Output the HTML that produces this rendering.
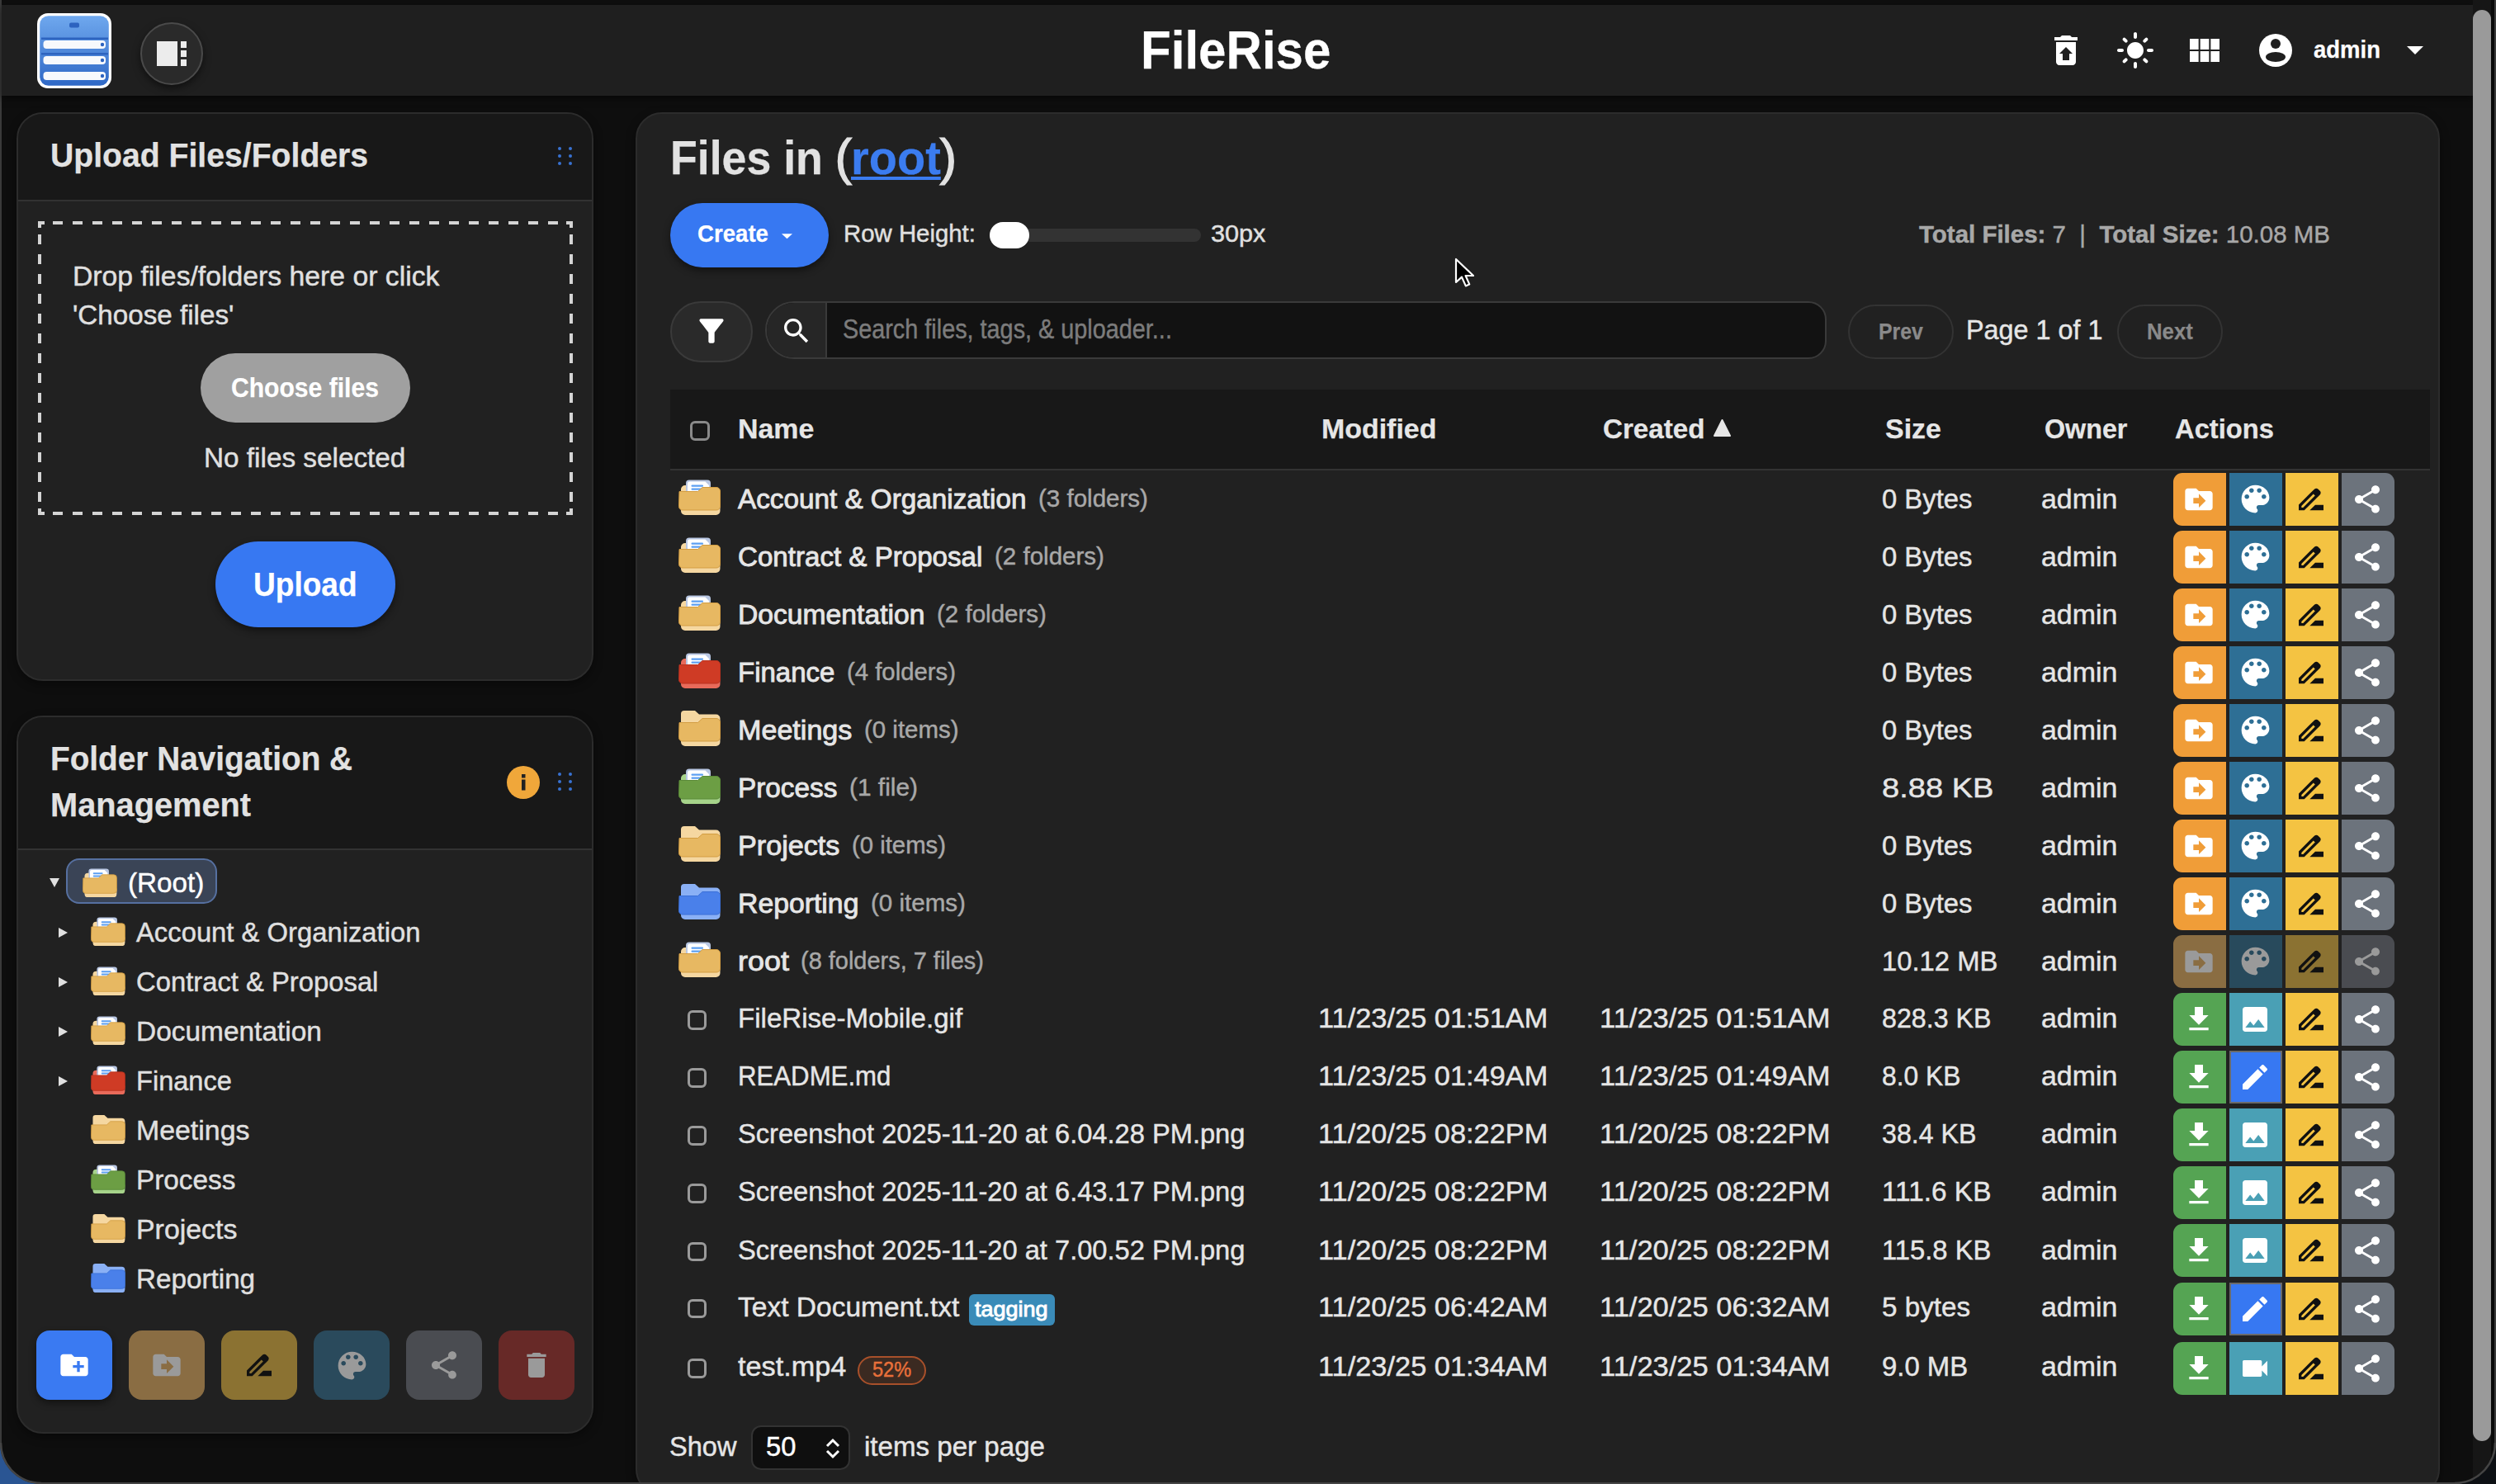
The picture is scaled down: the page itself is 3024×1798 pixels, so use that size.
<!DOCTYPE html><html><head><meta charset="utf-8"><style>
html,body{margin:0;padding:0}
body{width:3024px;height:1798px;overflow:hidden;position:relative;background:#0e0e0e;font-family:'Liberation Sans', sans-serif;}
b{font-weight:700}
</style></head><body><div style="position:absolute;left:0px;top:0px;width:3024px;height:6px;background:#0f0f0f"></div><div style="position:absolute;left:0px;top:0px;width:2px;height:1798px;background:#3a3a3a"></div><div style="position:absolute;left:2px;top:6px;width:2994px;height:110px;background:#1f1f1f;box-shadow:0 3px 8px rgba(0,0,0,.55)"></div><svg style="position:absolute;left:45px;top:15.5px" width="90" height="91" viewBox="0 0 90 91">
<defs><linearGradient id="lg" x1="0" y1="0" x2="0" y2="1"><stop offset="0" stop-color="#6fa8ee"/><stop offset="1" stop-color="#2f68c6"/></linearGradient></defs>
<rect x="0" y="0" width="90" height="91" rx="13" fill="#fff"/>
<rect x="3.2" y="3.2" width="83.6" height="84.6" rx="10.5" fill="url(#lg)"/>
<rect x="39" y="11.5" width="12" height="6" rx="2" fill="#2d63bf"/>
<rect x="5" y="29.5" width="81" height="2.5" fill="#2d63bf"/>
<rect x="5" y="48" width="81" height="2.5" fill="#2d63bf"/>
<rect x="7.5" y="33" width="75.5" height="10" rx="4" fill="#f7f9fc"/>
<rect x="7.5" y="52" width="75.5" height="10" rx="4" fill="#f7f9fc"/>
<rect x="7.5" y="71" width="75.5" height="10" rx="4" fill="#f7f9fc"/>
<circle cx="79" cy="38" r="2.2" fill="#2d63bf"/><circle cx="79" cy="57" r="2.2" fill="#2d63bf"/><circle cx="79" cy="76" r="2.2" fill="#2d63bf"/>
</svg><div style="position:absolute;left:170px;top:27px;width:76px;height:76px;background:#2a2a2a;border-radius:50%;border:2px solid #4a4a4a;box-shadow:0 4px 10px rgba(0,0,0,.5);box-sizing:border-box"></div><div style="position:absolute;left:190px;top:50px;width:25px;height:30px;background:#ececec"></div><div style="position:absolute;left:219px;top:50px;width:7px;height:7.5px;background:#ececec"></div><div style="position:absolute;left:219px;top:61px;width:7px;height:7.5px;background:#ececec"></div><div style="position:absolute;left:219px;top:72px;width:7px;height:7.5px;background:#ececec"></div><div style="position:absolute;left:1382.48px;top:29.00px;font-size:64.0px;line-height:64.0px;font-weight:700;color:#ffffff;white-space:pre;transform:scaleX(0.9387);transform-origin:0 0;;-webkit-text-stroke:0.25px #ffffff">FileRise</div><svg style="position:absolute;left:2479px;top:37px;" width="48" height="48" viewBox="0 0 24 24"><path fill="#fff" d="M19 4h-3.5l-1-1h-5l-1 1H5v2h14zM6 7v12c0 1.1.9 2 2 2h8c1.1 0 2-.9 2-2V7H6zm8 7v4h-4v-4H8l4-4 4 4h-2z"/></svg><svg style="position:absolute;left:2563px;top:37px;" width="48" height="48" viewBox="0 0 24 24"><path fill="#fff" d="M12 7c-2.76 0-5 2.24-5 5s2.24 5 5 5 5-2.24 5-5-2.24-5-5-5zM2 13h2c.55 0 1-.45 1-1s-.45-1-1-1H2c-.55 0-1 .45-1 1s.45 1 1 1zm18 0h2c.55 0 1-.45 1-1s-.45-1-1-1h-2c-.55 0-1 .45-1 1s.45 1 1 1zM11 2v2c0 .55.45 1 1 1s1-.45 1-1V2c0-.55-.45-1-1-1s-1 .45-1 1zm0 18v2c0 .55.45 1 1 1s1-.45 1-1v-2c0-.55-.45-1-1-1s-1 .45-1 1zM5.99 4.58c-.39-.39-1.03-.39-1.41 0-.39.39-.39 1.03 0 1.41l1.06 1.06c.39.39 1.03.39 1.41 0s.39-1.03 0-1.41L5.99 4.58zm12.37 12.37c-.39-.39-1.03-.39-1.41 0-.39.39-.39 1.03 0 1.41l1.06 1.06c.39.39 1.03.39 1.41 0 .39-.39.39-1.03 0-1.41l-1.06-1.06zm1.06-10.96c.39-.39.39-1.03 0-1.41-.39-.39-1.03-.39-1.41 0l-1.06 1.06c-.39.39-.39 1.03 0 1.41s1.03.39 1.41 0l1.06-1.06zM7.05 18.36c.39-.39.39-1.03 0-1.41-.39-.39-1.03-.39-1.41 0l-1.06 1.06c-.39.39-.39 1.03 0 1.41s1.03.39 1.41 0l1.06-1.06z"/></svg><svg style="position:absolute;left:2647px;top:37px;" width="48" height="48" viewBox="0 0 24 24"><path fill="#fff" d="M14.67 5v6.5H9.33V5h5.34zm1 6.5H21V5h-5.33v6.5zm-1 7.5v-6.5H9.33V19h5.34zm1-6.5V19H21v-6.5h-5.33zm-7.34 0H3V19h5.33v-6.5zm0-1V5H3v6.5h5.33z"/></svg><svg style="position:absolute;left:2737px;top:41px" width="40" height="40" viewBox="0 0 40 40">
<circle cx="20" cy="20" r="20" fill="#fff"/><circle cx="20" cy="12" r="6" fill="#1f1f1f"/><ellipse cx="20" cy="28" rx="12" ry="6" fill="#1f1f1f"/></svg><div style="position:absolute;left:2803.38px;top:44.75px;font-size:29.5px;line-height:29.5px;font-weight:700;color:#fff;white-space:pre;transform:scaleX(0.9318);transform-origin:0 0;;-webkit-text-stroke:0.25px #fff">admin</div><svg style="position:absolute;left:2916px;top:56px" width="20" height="10" viewBox="0 0 20 10"><path d="M0 0h20L10 10z" fill="#fff"/></svg><div style="position:absolute;left:2996px;top:0px;width:22px;height:1798px;background:#161616"></div><div style="position:absolute;left:2996px;top:12px;width:22px;height:1734px;background:#9a9a9a;border-radius:11px"></div><div style="position:absolute;left:3018px;top:0px;width:6px;height:1798px;background:#0a0a0a"></div><div style="position:absolute;left:20px;top:136px;width:699px;height:689px;background:#212121;border:2px solid #2c2c2c;border-radius:32px;box-sizing:border-box;overflow:hidden;box-shadow:0 4px 12px rgba(0,0,0,.4)"></div><div style="position:absolute;left:22px;top:138px;width:695px;height:104px;background:#181818;border-radius:30px 30px 0 0"></div><div style="position:absolute;left:22px;top:242px;width:695px;height:2px;background:#323232"></div><div style="position:absolute;left:60.74px;top:167.50px;font-size:41.0px;line-height:41.0px;font-weight:700;color:#e2e2e2;white-space:pre;transform:scaleX(0.9550);transform-origin:0 0;;-webkit-text-stroke:0.25px #e2e2e2">Upload Files/Folders</div><div style="position:absolute;left:675.5px;top:178.3px;width:4.0px;height:4.0px;background:#3872d2;border-radius:50%"></div><div style="position:absolute;left:675.5px;top:187.3px;width:4.0px;height:4.0px;background:#3872d2;border-radius:50%"></div><div style="position:absolute;left:675.5px;top:196.3px;width:4.0px;height:4.0px;background:#3872d2;border-radius:50%"></div><div style="position:absolute;left:689.0px;top:178.3px;width:4.0px;height:4.0px;background:#3872d2;border-radius:50%"></div><div style="position:absolute;left:689.0px;top:187.3px;width:4.0px;height:4.0px;background:#3872d2;border-radius:50%"></div><div style="position:absolute;left:689.0px;top:196.3px;width:4.0px;height:4.0px;background:#3872d2;border-radius:50%"></div><svg style="position:absolute;left:46px;top:268px" width="648" height="356" viewBox="0 0 648 356"><g stroke="#d4d4d4" stroke-width="4" fill="none"><path d="M0 2H648" stroke-dasharray="12 12" stroke-dashoffset="6"/><path d="M0 354H648" stroke-dasharray="12 12" stroke-dashoffset="6"/><path d="M2 0V356" stroke-dasharray="12 12" stroke-dashoffset="8"/><path d="M646 0V356" stroke-dasharray="12 12" stroke-dashoffset="8"/><path d="M0 2H8M2 0V8M640 2H648M646 0V8M0 354H8M2 348V356M640 354H648M646 348V356"/></g></svg><div style="position:absolute;left:88.13px;top:317.00px;font-size:34.0px;line-height:34.0px;font-weight:400;color:#e0e0e0;white-space:pre;transform:scaleX(0.9923);transform-origin:0 0;;-webkit-text-stroke:0.45px #e0e0e0">Drop files/folders here or click</div><div style="position:absolute;left:88.13px;top:364.00px;font-size:34.0px;line-height:34.0px;font-weight:400;color:#e0e0e0;white-space:pre;transform:scaleX(0.9765);transform-origin:0 0;;-webkit-text-stroke:0.45px #e0e0e0">'Choose files'</div><div style="position:absolute;left:243px;top:428px;width:254px;height:84px;background:#a0a0a0;border-radius:42px"></div><div style="position:absolute;left:279.63px;top:451.50px;font-size:34.0px;line-height:34.0px;font-weight:700;color:#ffffff;white-space:pre;transform:scaleX(0.8849);transform-origin:0 0;;-webkit-text-stroke:0.25px #ffffff">Choose files</div><div style="position:absolute;left:247.13px;top:537.00px;font-size:34.0px;line-height:34.0px;font-weight:400;color:#e0e0e0;white-space:pre;transform:scaleX(0.9797);transform-origin:0 0;;-webkit-text-stroke:0.45px #e0e0e0">No files selected</div><div style="position:absolute;left:261px;top:656px;width:218px;height:104px;background:#3778f2;border-radius:52px;box-shadow:0 4px 10px rgba(0,0,0,.45)"></div><div style="position:absolute;left:306.75px;top:687.50px;font-size:41.0px;line-height:41.0px;font-weight:700;color:#ffffff;white-space:pre;transform:scaleX(0.9040);transform-origin:0 0;;-webkit-text-stroke:0.25px #ffffff">Upload</div><div style="position:absolute;left:20px;top:867px;width:699px;height:870px;background:#212121;border:2px solid #2c2c2c;border-radius:32px;box-sizing:border-box;overflow:hidden;box-shadow:0 4px 12px rgba(0,0,0,.4)"></div><div style="position:absolute;left:22px;top:869px;width:695px;height:159px;background:#181818;border-radius:30px 30px 0 0"></div><div style="position:absolute;left:22px;top:1028px;width:695px;height:2px;background:#323232"></div><div style="position:absolute;left:60.74px;top:898.50px;font-size:41.0px;line-height:41.0px;font-weight:700;color:#e2e2e2;white-space:pre;transform:scaleX(0.9453);transform-origin:0 0;;-webkit-text-stroke:0.25px #e2e2e2">Folder Navigation &amp;</div><div style="position:absolute;left:60.74px;top:954.50px;font-size:41.0px;line-height:41.0px;font-weight:700;color:#e2e2e2;white-space:pre;transform:scaleX(0.9700);transform-origin:0 0;;-webkit-text-stroke:0.25px #e2e2e2">Management</div><svg style="position:absolute;left:614px;top:928px" width="40" height="40" viewBox="0 0 40 40"><circle cx="20" cy="20" r="20" fill="#f0a73a"/><rect x="18" y="16.5" width="4.5" height="13" fill="#222"/><rect x="18" y="10" width="4.5" height="4.5" fill="#222"/></svg><div style="position:absolute;left:675.5px;top:936.3px;width:4.0px;height:4.0px;background:#3872d2;border-radius:50%"></div><div style="position:absolute;left:675.5px;top:945.3px;width:4.0px;height:4.0px;background:#3872d2;border-radius:50%"></div><div style="position:absolute;left:675.5px;top:954.3px;width:4.0px;height:4.0px;background:#3872d2;border-radius:50%"></div><div style="position:absolute;left:689.0px;top:936.3px;width:4.0px;height:4.0px;background:#3872d2;border-radius:50%"></div><div style="position:absolute;left:689.0px;top:945.3px;width:4.0px;height:4.0px;background:#3872d2;border-radius:50%"></div><div style="position:absolute;left:689.0px;top:954.3px;width:4.0px;height:4.0px;background:#3872d2;border-radius:50%"></div><div style="position:absolute;left:80px;top:1040px;width:183px;height:55px;background:#3a4456;border:2px solid #5670a0;border-radius:16px;box-sizing:border-box"></div><svg style="position:absolute;left:60px;top:1064px" width="12" height="11" viewBox="0 0 12 11"><path d="M0 0h12L6 11z" fill="#e0e0e0"/></svg><svg style="position:absolute;left:100px;top:1052px" width="41.82" height="35.26" viewBox="0 0 51 43"><path d="M3 12a5 5 0 0 1 5-5h17v23h25.5v8a5 5 0 0 1-5 5H8a5 5 0 0 1-5-5z" fill="#f5d7a1"/><path d="M9 4.5a4 4 0 0 1 4-4h22a4 4 0 0 1 4 4v16H9z" fill="#b8c6e2"/><path d="M11 5a2.5 2.5 0 0 1 2.5-2.5h19l4.5 4.5v14H11z" fill="#fff"/><rect x="15.5" y="6.5" width="14.5" height="2.2" rx="1" fill="#5c9ff2"/><rect x="15.5" y="10.5" width="14.5" height="2.2" rx="1" fill="#5c9ff2"/><path d="M1 14.5h22.5l5.5-5h17a4.5 4.5 0 0 1 4.5 4.5v18.5a4.5 4.5 0 0 1-4.5 4.5H5a4.5 4.5 0 0 1-4.5-4.5z" fill="#e7b862" stroke="#d39d42" stroke-width="1"/></svg><div style="position:absolute;left:155.13px;top:1052.00px;font-size:34.0px;line-height:34.0px;font-weight:400;color:#ffffff;white-space:pre;transform:scaleX(0.9781);transform-origin:0 0;;-webkit-text-stroke:0.45px #ffffff">(Root)</div><svg style="position:absolute;left:71px;top:1124px" width="11" height="12" viewBox="0 0 11 12"><path d="M0 0v12l11-6z" fill="#e0e0e0"/></svg><svg style="position:absolute;left:110px;top:1111px" width="41.82" height="35.26" viewBox="0 0 51 43"><path d="M3 12a5 5 0 0 1 5-5h17v23h25.5v8a5 5 0 0 1-5 5H8a5 5 0 0 1-5-5z" fill="#f5d7a1"/><path d="M9 4.5a4 4 0 0 1 4-4h22a4 4 0 0 1 4 4v16H9z" fill="#b8c6e2"/><path d="M11 5a2.5 2.5 0 0 1 2.5-2.5h19l4.5 4.5v14H11z" fill="#fff"/><rect x="15.5" y="6.5" width="14.5" height="2.2" rx="1" fill="#5c9ff2"/><rect x="15.5" y="10.5" width="14.5" height="2.2" rx="1" fill="#5c9ff2"/><path d="M1 14.5h22.5l5.5-5h17a4.5 4.5 0 0 1 4.5 4.5v18.5a4.5 4.5 0 0 1-4.5 4.5H5a4.5 4.5 0 0 1-4.5-4.5z" fill="#e7b862" stroke="#d39d42" stroke-width="1"/></svg><div style="position:absolute;left:164.63px;top:1112.00px;font-size:34.0px;line-height:34.0px;font-weight:400;color:#e0e0e0;white-space:pre;transform:scaleX(0.9642);transform-origin:0 0;;-webkit-text-stroke:0.45px #e0e0e0">Account &amp; Organization</div><svg style="position:absolute;left:71px;top:1184px" width="11" height="12" viewBox="0 0 11 12"><path d="M0 0v12l11-6z" fill="#e0e0e0"/></svg><svg style="position:absolute;left:110px;top:1171px" width="41.82" height="35.26" viewBox="0 0 51 43"><path d="M3 12a5 5 0 0 1 5-5h17v23h25.5v8a5 5 0 0 1-5 5H8a5 5 0 0 1-5-5z" fill="#f5d7a1"/><path d="M9 4.5a4 4 0 0 1 4-4h22a4 4 0 0 1 4 4v16H9z" fill="#b8c6e2"/><path d="M11 5a2.5 2.5 0 0 1 2.5-2.5h19l4.5 4.5v14H11z" fill="#fff"/><rect x="15.5" y="6.5" width="14.5" height="2.2" rx="1" fill="#5c9ff2"/><rect x="15.5" y="10.5" width="14.5" height="2.2" rx="1" fill="#5c9ff2"/><path d="M1 14.5h22.5l5.5-5h17a4.5 4.5 0 0 1 4.5 4.5v18.5a4.5 4.5 0 0 1-4.5 4.5H5a4.5 4.5 0 0 1-4.5-4.5z" fill="#e7b862" stroke="#d39d42" stroke-width="1"/></svg><div style="position:absolute;left:164.63px;top:1172.00px;font-size:34.0px;line-height:34.0px;font-weight:400;color:#e0e0e0;white-space:pre;transform:scaleX(0.9643);transform-origin:0 0;;-webkit-text-stroke:0.45px #e0e0e0">Contract &amp; Proposal</div><svg style="position:absolute;left:71px;top:1244px" width="11" height="12" viewBox="0 0 11 12"><path d="M0 0v12l11-6z" fill="#e0e0e0"/></svg><svg style="position:absolute;left:110px;top:1231px" width="41.82" height="35.26" viewBox="0 0 51 43"><path d="M3 12a5 5 0 0 1 5-5h17v23h25.5v8a5 5 0 0 1-5 5H8a5 5 0 0 1-5-5z" fill="#f5d7a1"/><path d="M9 4.5a4 4 0 0 1 4-4h22a4 4 0 0 1 4 4v16H9z" fill="#b8c6e2"/><path d="M11 5a2.5 2.5 0 0 1 2.5-2.5h19l4.5 4.5v14H11z" fill="#fff"/><rect x="15.5" y="6.5" width="14.5" height="2.2" rx="1" fill="#5c9ff2"/><rect x="15.5" y="10.5" width="14.5" height="2.2" rx="1" fill="#5c9ff2"/><path d="M1 14.5h22.5l5.5-5h17a4.5 4.5 0 0 1 4.5 4.5v18.5a4.5 4.5 0 0 1-4.5 4.5H5a4.5 4.5 0 0 1-4.5-4.5z" fill="#e7b862" stroke="#d39d42" stroke-width="1"/></svg><div style="position:absolute;left:164.63px;top:1232.00px;font-size:34.0px;line-height:34.0px;font-weight:400;color:#e0e0e0;white-space:pre;transform:scaleX(0.9834);transform-origin:0 0;;-webkit-text-stroke:0.45px #e0e0e0">Documentation</div><svg style="position:absolute;left:71px;top:1304px" width="11" height="12" viewBox="0 0 11 12"><path d="M0 0v12l11-6z" fill="#e0e0e0"/></svg><svg style="position:absolute;left:110px;top:1291px" width="41.82" height="35.26" viewBox="0 0 51 43"><path d="M3 12a5 5 0 0 1 5-5h17v23h25.5v8a5 5 0 0 1-5 5H8a5 5 0 0 1-5-5z" fill="#e86a5a"/><path d="M9 4.5a4 4 0 0 1 4-4h22a4 4 0 0 1 4 4v16H9z" fill="#b8c6e2"/><path d="M11 5a2.5 2.5 0 0 1 2.5-2.5h19l4.5 4.5v14H11z" fill="#fff"/><rect x="15.5" y="6.5" width="14.5" height="2.2" rx="1" fill="#5c9ff2"/><rect x="15.5" y="10.5" width="14.5" height="2.2" rx="1" fill="#5c9ff2"/><path d="M1 14.5h22.5l5.5-5h17a4.5 4.5 0 0 1 4.5 4.5v18.5a4.5 4.5 0 0 1-4.5 4.5H5a4.5 4.5 0 0 1-4.5-4.5z" fill="#cf3b25" stroke="#b83220" stroke-width="1"/></svg><div style="position:absolute;left:164.63px;top:1292.00px;font-size:34.0px;line-height:34.0px;font-weight:400;color:#e0e0e0;white-space:pre;transform:scaleX(0.9581);transform-origin:0 0;;-webkit-text-stroke:0.45px #e0e0e0">Finance</div><svg style="position:absolute;left:110px;top:1351px" width="41.82" height="35.26" viewBox="0 0 51 43"><path d="M7 0h13l5 4.5h20.5a5 5 0 0 1 5 5V38a5 5 0 0 1-5 5H8a5 5 0 0 1-5-5V4a4 4 0 0 1 4-4z" fill="#f5d7a1"/><path d="M1 14.5h22.5l5.5-5h17a4.5 4.5 0 0 1 4.5 4.5v18.5a4.5 4.5 0 0 1-4.5 4.5H5a4.5 4.5 0 0 1-4.5-4.5z" fill="#e7b862" stroke="#d39d42" stroke-width="1"/></svg><div style="position:absolute;left:164.63px;top:1352.00px;font-size:34.0px;line-height:34.0px;font-weight:400;color:#e0e0e0;white-space:pre;transform:scaleX(0.9959);transform-origin:0 0;;-webkit-text-stroke:0.45px #e0e0e0">Meetings</div><svg style="position:absolute;left:110px;top:1411px" width="41.82" height="35.26" viewBox="0 0 51 43"><path d="M3 12a5 5 0 0 1 5-5h17v23h25.5v8a5 5 0 0 1-5 5H8a5 5 0 0 1-5-5z" fill="#a6d38a"/><path d="M9 4.5a4 4 0 0 1 4-4h22a4 4 0 0 1 4 4v16H9z" fill="#b8c6e2"/><path d="M11 5a2.5 2.5 0 0 1 2.5-2.5h19l4.5 4.5v14H11z" fill="#fff"/><rect x="15.5" y="6.5" width="14.5" height="2.2" rx="1" fill="#5c9ff2"/><rect x="15.5" y="10.5" width="14.5" height="2.2" rx="1" fill="#5c9ff2"/><path d="M1 14.5h22.5l5.5-5h17a4.5 4.5 0 0 1 4.5 4.5v18.5a4.5 4.5 0 0 1-4.5 4.5H5a4.5 4.5 0 0 1-4.5-4.5z" fill="#6c9e44" stroke="#5a8a38" stroke-width="1"/></svg><div style="position:absolute;left:164.63px;top:1412.00px;font-size:34.0px;line-height:34.0px;font-weight:400;color:#e0e0e0;white-space:pre;transform:scaleX(0.9802);transform-origin:0 0;;-webkit-text-stroke:0.45px #e0e0e0">Process</div><svg style="position:absolute;left:110px;top:1471px" width="41.82" height="35.26" viewBox="0 0 51 43"><path d="M7 0h13l5 4.5h20.5a5 5 0 0 1 5 5V38a5 5 0 0 1-5 5H8a5 5 0 0 1-5-5V4a4 4 0 0 1 4-4z" fill="#f5d7a1"/><path d="M1 14.5h22.5l5.5-5h17a4.5 4.5 0 0 1 4.5 4.5v18.5a4.5 4.5 0 0 1-4.5 4.5H5a4.5 4.5 0 0 1-4.5-4.5z" fill="#e7b862" stroke="#d39d42" stroke-width="1"/></svg><div style="position:absolute;left:164.63px;top:1472.00px;font-size:34.0px;line-height:34.0px;font-weight:400;color:#e0e0e0;white-space:pre;transform:scaleX(0.9965);transform-origin:0 0;;-webkit-text-stroke:0.45px #e0e0e0">Projects</div><svg style="position:absolute;left:110px;top:1531px" width="41.82" height="35.26" viewBox="0 0 51 43"><path d="M7 0h13l5 4.5h20.5a5 5 0 0 1 5 5V38a5 5 0 0 1-5 5H8a5 5 0 0 1-5-5V4a4 4 0 0 1 4-4z" fill="#8ab0f5"/><path d="M1 14.5h22.5l5.5-5h17a4.5 4.5 0 0 1 4.5 4.5v18.5a4.5 4.5 0 0 1-4.5 4.5H5a4.5 4.5 0 0 1-4.5-4.5z" fill="#4a80ea" stroke="#3a6fd8" stroke-width="1"/></svg><div style="position:absolute;left:164.63px;top:1532.00px;font-size:34.0px;line-height:34.0px;font-weight:400;color:#e0e0e0;white-space:pre;transform:scaleX(0.9775);transform-origin:0 0;;-webkit-text-stroke:0.45px #e0e0e0">Reporting</div><div style="position:absolute;left:44px;top:1612px;width:92px;height:84px;background:#3a7af2;border-radius:16px;box-shadow:0 4px 8px rgba(0,0,0,.45)"></div><svg style="position:absolute;left:70px;top:1634px;" width="40" height="40" viewBox="0 0 24 24"><path fill="#ffffff" d="M20 6h-8l-2-2H4c-1.11 0-1.99.89-1.99 2L2 18c0 1.11.89 2 2 2h16c1.11 0 2-.89 2-2V8c0-1.11-.89-2-2-2zm-1 8h-3v3h-2v-3h-3v-2h3V9h2v3h3v2z"/></svg><div style="position:absolute;left:156px;top:1612px;width:92px;height:84px;background:#8a6d43;border-radius:16px"></div><svg style="position:absolute;left:182px;top:1634px;" width="40" height="40" viewBox="0 0 24 24"><path fill="#9a9a9a" d="M20 6h-8l-2-2H4c-1.1 0-1.99.9-1.99 2L2 18c0 1.1.9 2 2 2h16c1.1 0 2-.9 2-2V8c0-1.1-.9-2-2-2zm-8 12v-3H8v-4h4V8l5 5-5 5z"/></svg><div style="position:absolute;left:268px;top:1612px;width:92px;height:84px;background:#8b7232;border-radius:16px"></div><svg style="position:absolute;left:294px;top:1634px;" width="40" height="40" viewBox="0 0 24 24"><path fill="#111111" d="M18.41 5.8L17.2 4.59c-.78-.78-2.05-.78-2.83 0l-2.68 2.68L3 15.96V20h4.04l8.74-8.74 2.63-2.63c.79-.78.79-2.05 0-2.83zM6.21 18H5v-1.21l8.66-8.66 1.21 1.21L6.21 18zM11 20l4-4h6v4H11z"/></svg><div style="position:absolute;left:380px;top:1612px;width:92px;height:84px;background:#2a4a5c;border-radius:16px"></div><svg style="position:absolute;left:403.5px;top:1631.5px;" width="45" height="45" viewBox="0 0 24 24"><path fill="#9a9a9a" d="M12 3c-4.97 0-9 4.03-9 9s4.03 9 9 9c.83 0 1.5-.67 1.5-1.5 0-.39-.15-.74-.39-1.01-.23-.26-.38-.61-.38-.99 0-.83.67-1.5 1.5-1.5H16c2.76 0 5-2.24 5-5 0-4.42-4.03-8-9-8zm-5.5 9c-.83 0-1.5-.67-1.5-1.5S5.67 9 6.5 9 8 9.67 8 10.5 7.33 12 6.5 12zm3-4C8.67 8 8 7.330 8 6.5S8.67 5 9.5 5s1.5.67 1.5 1.5S10.33 8 9.5 8zm5 0c-.83 0-1.5-.67-1.5-1.5S13.67 5 14.5 5s1.5.67 1.5 1.5S15.33 8 14.5 8zm3 4c-.83 0-1.5-.67-1.5-1.5S16.67 9 17.5 9s1.5.67 1.5 1.5-.67 1.5-1.5 1.5z"/></svg><div style="position:absolute;left:492px;top:1612px;width:92px;height:84px;background:#4a4c51;border-radius:16px"></div><svg style="position:absolute;left:518px;top:1634px;" width="40" height="40" viewBox="0 0 24 24"><path fill="#9a9a9a" d="M18 16.08c-.76 0-1.44.3-1.96.77L8.91 12.7c.05-.23.09-.46.09-.7s-.04-.47-.09-.7l7.05-4.11c.54.5 1.25.81 2.04.81 1.66 0 3-1.34 3-3s-1.34-3-3-3-3 1.34-3 3c0 .24.04.47.09.7L8.04 9.81C7.5 9.31 6.79 9 6 9c-1.66 0-3 1.34-3 3s1.34 3 3 3c.79 0 1.5-.31 2.04-.81l7.12 4.16c-.05.21-.08.43-.08.65 0 1.61 1.31 2.92 2.92 2.92 1.61 0 2.92-1.31 2.92-2.92s-1.31-2.92-2.92-2.92z"/></svg><div style="position:absolute;left:604px;top:1612px;width:92px;height:84px;background:#672927;border-radius:16px"></div><svg style="position:absolute;left:630px;top:1634px;" width="40" height="40" viewBox="0 0 24 24"><path fill="#9a9a9a" d="M6 19c0 1.1.9 2 2 2h8c1.1 0 2-.9 2-2V7H6v12zM19 4h-3.5l-1-1h-5l-1 1H5v2h14V4z"/></svg><div style="position:absolute;left:770px;top:136px;width:2186px;height:1676px;background:#212121;border:2px solid #2c2c2c;border-radius:32px;box-sizing:border-box;box-shadow:0 4px 12px rgba(0,0,0,.4)"></div><div style="position:absolute;left:811.81px;top:162.00px;font-size:58.0px;line-height:58.0px;font-weight:700;color:#e2e2e2;white-space:pre;transform:scaleX(0.9248);transform-origin:0 0;;-webkit-text-stroke:0.25px #e2e2e2">Files in</div><div style="position:absolute;left:1011.59px;top:159.00px;font-size:62.0px;line-height:62.0px;font-weight:400;color:#e2e2e2;white-space:pre;;-webkit-text-stroke:1.2px #e2e2e2">(</div><div style="position:absolute;left:1030.81px;top:162.00px;font-size:58.0px;line-height:58.0px;font-weight:700;color:#3b7cf0;white-space:pre;transform:scaleX(0.9650);transform-origin:0 0;text-decoration:underline;text-decoration-thickness:4px;text-underline-offset:3px;-webkit-text-stroke:0.25px #3b7cf0">root</div><div style="position:absolute;left:1138.59px;top:159.00px;font-size:62.0px;line-height:62.0px;font-weight:400;color:#e2e2e2;white-space:pre;;-webkit-text-stroke:1.2px #e2e2e2">)</div><div style="position:absolute;left:812px;top:246px;width:192px;height:78px;background:#3778f2;border-radius:39px;box-shadow:0 4px 10px rgba(0,0,0,.45)"></div><div style="position:absolute;left:845.38px;top:267.75px;font-size:29.5px;line-height:29.5px;font-weight:700;color:#fff;white-space:pre;transform:scaleX(0.9360);transform-origin:0 0;;-webkit-text-stroke:0.25px #fff">Create</div><svg style="position:absolute;left:947px;top:283px" width="13" height="6.5" viewBox="0 0 13 6"><path d="M0 0h13L6.5 6z" fill="#fff"/></svg><div style="position:absolute;left:1022.40px;top:268.50px;font-size:29.0px;line-height:29.0px;font-weight:400;color:#e0e0e0;white-space:pre;transform:scaleX(1.0122);transform-origin:0 0;;-webkit-text-stroke:0.45px #e0e0e0">Row Height:</div><div style="position:absolute;left:1199px;top:277px;width:256px;height:16px;background:#333333;border-radius:8px"></div><div style="position:absolute;left:1199px;top:269px;width:48px;height:32px;background:#ffffff;border-radius:16px"></div><div style="position:absolute;left:1466.90px;top:268.50px;font-size:29.0px;line-height:29.0px;font-weight:400;color:#e0e0e0;white-space:pre;transform:scaleX(1.0558);transform-origin:0 0;;-webkit-text-stroke:0.45px #e0e0e0">30px</div><div style="position:absolute;left:2325.35px;top:268.50px;font-size:30.0px;line-height:30.0px;font-weight:400;color:#a8a8a8;white-space:pre;transform:scaleX(0.9826);transform-origin:0 0;;-webkit-text-stroke:0.45px #a8a8a8"><b>Total Files:</b> 7&nbsp; |&nbsp; <b>Total Size:</b> 10.08 MB</div><div style="position:absolute;left:812px;top:365px;width:100px;height:74px;background:#2a2a2a;border:2px solid #3a3a3a;border-radius:37px;box-sizing:border-box"></div><svg style="position:absolute;left:840px;top:379px;" width="44" height="44" viewBox="0 0 24 24"><path fill="#fff" d="M4.25 5.61C6.27 8.2 10 13 10 13v6c0 .55.45 1 1 1h2c.55 0 1-.45 1-1v-6s3.72-4.8 5.74-7.39c.51-.66.04-1.61-.79-1.61H5.04c-.83 0-1.3.95-.79 1.61z"/></svg><div style="position:absolute;left:927px;top:365px;width:1286px;height:70px;background:#121212;border:2px solid #3a3a3a;border-radius:35px 22px 22px 35px;box-sizing:border-box;overflow:hidden"></div><div style="position:absolute;left:929px;top:367px;width:72px;height:66px;background:#262626;border-radius:33px 0 0 33px"></div><div style="position:absolute;left:1000px;top:367px;width:2px;height:66px;background:#3a3a3a"></div><svg style="position:absolute;left:945px;top:381px;" width="40" height="40" viewBox="0 0 24 24"><path fill="#fff" d="M15.5 14h-.79l-.28-.27C15.41 12.59 16 11.11 16 9.5 16 5.91 13.09 3 9.5 3S3 5.91 3 9.5 5.91 16 9.5 16c1.61 0 3.09-.59 4.23-1.57l.27.28v.79l5 4.99L20.49 19l-4.99-5zm-6 0C7.01 14 5 11.99 5 9.5S7.01 5 9.5 5 14 7.01 14 9.5 11.99 14 9.5 14z"/></svg><div style="position:absolute;left:1020.63px;top:380.50px;font-size:34.0px;line-height:34.0px;font-weight:400;color:#7c7c7c;white-space:pre;transform:scaleX(0.8476);transform-origin:0 0;;-webkit-text-stroke:0.45px #7c7c7c">Search files, tags, &amp; uploader...</div><div style="position:absolute;left:2239px;top:369px;width:128px;height:66px;border:2px solid #333;border-radius:33px;box-sizing:border-box"></div><div style="position:absolute;left:2276.03px;top:386.75px;font-size:28.5px;line-height:28.5px;font-weight:700;color:#8a8a8a;white-space:pre;transform:scaleX(0.8712);transform-origin:0 0;;-webkit-text-stroke:0.25px #8a8a8a">Prev</div><div style="position:absolute;left:2381.73px;top:382.00px;font-size:34.0px;line-height:34.0px;font-weight:400;color:#e6e6e6;white-space:pre;transform:scaleX(0.9510);transform-origin:0 0;;-webkit-text-stroke:0.45px #e6e6e6">Page 1 of 1</div><div style="position:absolute;left:2565px;top:369px;width:128px;height:66px;border:2px solid #333;border-radius:33px;box-sizing:border-box"></div><div style="position:absolute;left:2601.23px;top:386.75px;font-size:28.5px;line-height:28.5px;font-weight:700;color:#8a8a8a;white-space:pre;transform:scaleX(0.9040);transform-origin:0 0;;-webkit-text-stroke:0.25px #8a8a8a">Next</div><div style="position:absolute;left:812px;top:472px;width:2132px;height:96px;background:#181818"></div><div style="position:absolute;left:812px;top:568px;width:2132px;height:2px;background:#333333"></div><div style="position:absolute;left:836px;top:510px;width:24px;height:24px;border:3px solid #8a8a8a;border-radius:6px;box-sizing:border-box"></div><div style="position:absolute;left:894.13px;top:501.50px;font-size:34.0px;line-height:34.0px;font-weight:700;color:#e6e6e6;white-space:pre;transform:scaleX(0.9977);transform-origin:0 0;;-webkit-text-stroke:0.25px #e6e6e6">Name</div><div style="position:absolute;left:1601.13px;top:501.50px;font-size:34.0px;line-height:34.0px;font-weight:700;color:#e6e6e6;white-space:pre;transform:scaleX(0.9974);transform-origin:0 0;;-webkit-text-stroke:0.25px #e6e6e6">Modified</div><div style="position:absolute;left:1942.13px;top:501.50px;font-size:34.0px;line-height:34.0px;font-weight:700;color:#e6e6e6;white-space:pre;transform:scaleX(0.9747);transform-origin:0 0;;-webkit-text-stroke:0.25px #e6e6e6">Created</div><svg style="position:absolute;left:2076px;top:508px" width="21" height="21" viewBox="0 0 21 21"><path d="M10.5 1 L20 20 H1z" fill="#e6e6e6" stroke="#e6e6e6" stroke-width="2" stroke-linejoin="round"/></svg><div style="position:absolute;left:2283.73px;top:501.50px;font-size:34.0px;line-height:34.0px;font-weight:700;color:#e6e6e6;white-space:pre;transform:scaleX(0.9978);transform-origin:0 0;;-webkit-text-stroke:0.25px #e6e6e6">Size</div><div style="position:absolute;left:2477.13px;top:501.50px;font-size:34.0px;line-height:34.0px;font-weight:700;color:#e6e6e6;white-space:pre;transform:scaleX(0.9488);transform-origin:0 0;;-webkit-text-stroke:0.25px #e6e6e6">Owner</div><div style="position:absolute;left:2635.13px;top:501.50px;font-size:34.0px;line-height:34.0px;font-weight:700;color:#e6e6e6;white-space:pre;transform:scaleX(0.9624);transform-origin:0 0;;-webkit-text-stroke:0.25px #e6e6e6">Actions</div><svg style="position:absolute;left:822px;top:581px" width="51.0" height="43.0" viewBox="0 0 51 43"><path d="M3 12a5 5 0 0 1 5-5h17v23h25.5v8a5 5 0 0 1-5 5H8a5 5 0 0 1-5-5z" fill="#f5d7a1"/><path d="M9 4.5a4 4 0 0 1 4-4h22a4 4 0 0 1 4 4v16H9z" fill="#b8c6e2"/><path d="M11 5a2.5 2.5 0 0 1 2.5-2.5h19l4.5 4.5v14H11z" fill="#fff"/><rect x="15.5" y="6.5" width="14.5" height="2.2" rx="1" fill="#5c9ff2"/><rect x="15.5" y="10.5" width="14.5" height="2.2" rx="1" fill="#5c9ff2"/><path d="M1 14.5h22.5l5.5-5h17a4.5 4.5 0 0 1 4.5 4.5v18.5a4.5 4.5 0 0 1-4.5 4.5H5a4.5 4.5 0 0 1-4.5-4.5z" fill="#e7b862" stroke="#d39d42" stroke-width="1"/></svg><div style="position:absolute;left:894.13px;top:587.40px;font-size:34.0px;line-height:34.0px;font-weight:400;color:#e6e6e6;white-space:pre;transform:scaleX(0.9782);transform-origin:0 0;-webkit-text-stroke:0.9px #e6e6e6">Account &amp; Organization</div><div style="position:absolute;left:1257.88px;top:589.15px;font-size:29.5px;line-height:29.5px;font-weight:400;color:#a8a8a8;white-space:pre;transform:scaleX(1.0012);transform-origin:0 0;;-webkit-text-stroke:0.45px #a8a8a8">(3 folders)</div><div style="position:absolute;left:2280.13px;top:587.40px;font-size:34.0px;line-height:34.0px;font-weight:400;color:#e6e6e6;white-space:pre;transform:scaleX(0.9648);transform-origin:0 0;;-webkit-text-stroke:0.45px #e6e6e6">0 Bytes</div><div style="position:absolute;left:2473.13px;top:587.40px;font-size:34.0px;line-height:34.0px;font-weight:400;color:#e6e6e6;white-space:pre;transform:scaleX(0.9977);transform-origin:0 0;;-webkit-text-stroke:0.45px #e6e6e6">admin</div><div style="position:absolute;left:2633px;top:573px;width:64px;height:64px;background:#f09d38;border-radius:11px 0 0 11px"></div><svg style="position:absolute;left:2644px;top:585px;" width="40" height="40" viewBox="0 0 24 24"><path fill="#fff" d="M20 6h-8l-2-2H4c-1.1 0-1.99.9-1.99 2L2 18c0 1.1.9 2 2 2h16c1.1 0 2-.9 2-2V8c0-1.1-.9-2-2-2zm-8 12v-3H8v-4h4V8l5 5-5 5z"/></svg><div style="position:absolute;left:2701px;top:573px;width:64px;height:64px;background:#2e6f95;border-radius:0"></div><svg style="position:absolute;left:2709.5px;top:582px;" width="45" height="45" viewBox="0 0 24 24"><path fill="#fff" d="M12 3c-4.97 0-9 4.03-9 9s4.03 9 9 9c.83 0 1.5-.67 1.5-1.5 0-.39-.15-.74-.39-1.01-.23-.26-.38-.61-.38-.99 0-.83.67-1.5 1.5-1.5H16c2.76 0 5-2.24 5-5 0-4.42-4.03-8-9-8zm-5.5 9c-.83 0-1.5-.67-1.5-1.5S5.67 9 6.5 9 8 9.67 8 10.5 7.33 12 6.5 12zm3-4C8.67 8 8 7.330 8 6.5S8.67 5 9.5 5s1.5.67 1.5 1.5S10.33 8 9.5 8zm5 0c-.83 0-1.5-.67-1.5-1.5S13.67 5 14.5 5s1.5.67 1.5 1.5S15.33 8 14.5 8zm3 4c-.83 0-1.5-.67-1.5-1.5S16.67 9 17.5 9s1.5.67 1.5 1.5-.67 1.5-1.5 1.5z"/></svg><div style="position:absolute;left:2769px;top:573px;width:64px;height:64px;background:#f4c342;border-radius:0"></div><svg style="position:absolute;left:2780px;top:585px;" width="40" height="40" viewBox="0 0 24 24"><path fill="#111" d="M18.41 5.8L17.2 4.59c-.78-.78-2.05-.78-2.83 0l-2.68 2.68L3 15.96V20h4.04l8.74-8.74 2.63-2.63c.79-.78.79-2.05 0-2.83zM6.21 18H5v-1.21l8.66-8.66 1.21 1.21L6.21 18zM11 20l4-4h6v4H11z"/></svg><div style="position:absolute;left:2837px;top:573px;width:64px;height:64px;background:#6c737c;border-radius:0 11px 11px 0"></div><svg style="position:absolute;left:2848px;top:585px;" width="40" height="40" viewBox="0 0 24 24"><path fill="#fff" d="M18 16.08c-.76 0-1.44.3-1.96.77L8.91 12.7c.05-.23.09-.46.09-.7s-.04-.47-.09-.7l7.05-4.11c.54.5 1.25.81 2.04.81 1.66 0 3-1.34 3-3s-1.34-3-3-3-3 1.34-3 3c0 .24.04.47.09.7L8.04 9.81C7.5 9.31 6.79 9 6 9c-1.66 0-3 1.34-3 3s1.34 3 3 3c.79 0 1.5-.31 2.04-.81l7.12 4.16c-.05.21-.08.43-.08.65 0 1.61 1.31 2.92 2.92 2.92 1.61 0 2.92-1.31 2.92-2.92s-1.31-2.92-2.92-2.92z"/></svg><svg style="position:absolute;left:822px;top:651px" width="51.0" height="43.0" viewBox="0 0 51 43"><path d="M3 12a5 5 0 0 1 5-5h17v23h25.5v8a5 5 0 0 1-5 5H8a5 5 0 0 1-5-5z" fill="#f5d7a1"/><path d="M9 4.5a4 4 0 0 1 4-4h22a4 4 0 0 1 4 4v16H9z" fill="#b8c6e2"/><path d="M11 5a2.5 2.5 0 0 1 2.5-2.5h19l4.5 4.5v14H11z" fill="#fff"/><rect x="15.5" y="6.5" width="14.5" height="2.2" rx="1" fill="#5c9ff2"/><rect x="15.5" y="10.5" width="14.5" height="2.2" rx="1" fill="#5c9ff2"/><path d="M1 14.5h22.5l5.5-5h17a4.5 4.5 0 0 1 4.5 4.5v18.5a4.5 4.5 0 0 1-4.5 4.5H5a4.5 4.5 0 0 1-4.5-4.5z" fill="#e7b862" stroke="#d39d42" stroke-width="1"/></svg><div style="position:absolute;left:894.13px;top:657.40px;font-size:34.0px;line-height:34.0px;font-weight:400;color:#e6e6e6;white-space:pre;transform:scaleX(0.9741);transform-origin:0 0;-webkit-text-stroke:0.9px #e6e6e6">Contract &amp; Proposal</div><div style="position:absolute;left:1204.88px;top:659.15px;font-size:29.5px;line-height:29.5px;font-weight:400;color:#a8a8a8;white-space:pre;transform:scaleX(1.0012);transform-origin:0 0;;-webkit-text-stroke:0.45px #a8a8a8">(2 folders)</div><div style="position:absolute;left:2280.13px;top:657.40px;font-size:34.0px;line-height:34.0px;font-weight:400;color:#e6e6e6;white-space:pre;transform:scaleX(0.9648);transform-origin:0 0;;-webkit-text-stroke:0.45px #e6e6e6">0 Bytes</div><div style="position:absolute;left:2473.13px;top:657.40px;font-size:34.0px;line-height:34.0px;font-weight:400;color:#e6e6e6;white-space:pre;transform:scaleX(0.9977);transform-origin:0 0;;-webkit-text-stroke:0.45px #e6e6e6">admin</div><div style="position:absolute;left:2633px;top:643px;width:64px;height:64px;background:#f09d38;border-radius:11px 0 0 11px"></div><svg style="position:absolute;left:2644px;top:655px;" width="40" height="40" viewBox="0 0 24 24"><path fill="#fff" d="M20 6h-8l-2-2H4c-1.1 0-1.99.9-1.99 2L2 18c0 1.1.9 2 2 2h16c1.1 0 2-.9 2-2V8c0-1.1-.9-2-2-2zm-8 12v-3H8v-4h4V8l5 5-5 5z"/></svg><div style="position:absolute;left:2701px;top:643px;width:64px;height:64px;background:#2e6f95;border-radius:0"></div><svg style="position:absolute;left:2709.5px;top:652px;" width="45" height="45" viewBox="0 0 24 24"><path fill="#fff" d="M12 3c-4.97 0-9 4.03-9 9s4.03 9 9 9c.83 0 1.5-.67 1.5-1.5 0-.39-.15-.74-.39-1.01-.23-.26-.38-.61-.38-.99 0-.83.67-1.5 1.5-1.5H16c2.76 0 5-2.24 5-5 0-4.42-4.03-8-9-8zm-5.5 9c-.83 0-1.5-.67-1.5-1.5S5.67 9 6.5 9 8 9.67 8 10.5 7.33 12 6.5 12zm3-4C8.67 8 8 7.330 8 6.5S8.67 5 9.5 5s1.5.67 1.5 1.5S10.33 8 9.5 8zm5 0c-.83 0-1.5-.67-1.5-1.5S13.67 5 14.5 5s1.5.67 1.5 1.5S15.33 8 14.5 8zm3 4c-.83 0-1.5-.67-1.5-1.5S16.67 9 17.5 9s1.5.67 1.5 1.5-.67 1.5-1.5 1.5z"/></svg><div style="position:absolute;left:2769px;top:643px;width:64px;height:64px;background:#f4c342;border-radius:0"></div><svg style="position:absolute;left:2780px;top:655px;" width="40" height="40" viewBox="0 0 24 24"><path fill="#111" d="M18.41 5.8L17.2 4.59c-.78-.78-2.05-.78-2.83 0l-2.68 2.68L3 15.96V20h4.04l8.74-8.74 2.63-2.63c.79-.78.79-2.05 0-2.83zM6.21 18H5v-1.21l8.66-8.66 1.21 1.21L6.21 18zM11 20l4-4h6v4H11z"/></svg><div style="position:absolute;left:2837px;top:643px;width:64px;height:64px;background:#6c737c;border-radius:0 11px 11px 0"></div><svg style="position:absolute;left:2848px;top:655px;" width="40" height="40" viewBox="0 0 24 24"><path fill="#fff" d="M18 16.08c-.76 0-1.44.3-1.96.77L8.91 12.7c.05-.23.09-.46.09-.7s-.04-.47-.09-.7l7.05-4.11c.54.5 1.25.81 2.04.81 1.66 0 3-1.34 3-3s-1.34-3-3-3-3 1.34-3 3c0 .24.04.47.09.7L8.04 9.81C7.5 9.31 6.79 9 6 9c-1.66 0-3 1.34-3 3s1.34 3 3 3c.79 0 1.5-.31 2.04-.81l7.12 4.16c-.05.21-.08.43-.08.65 0 1.61 1.31 2.92 2.92 2.92 1.61 0 2.92-1.31 2.92-2.92s-1.31-2.92-2.92-2.92z"/></svg><svg style="position:absolute;left:822px;top:721px" width="51.0" height="43.0" viewBox="0 0 51 43"><path d="M3 12a5 5 0 0 1 5-5h17v23h25.5v8a5 5 0 0 1-5 5H8a5 5 0 0 1-5-5z" fill="#f5d7a1"/><path d="M9 4.5a4 4 0 0 1 4-4h22a4 4 0 0 1 4 4v16H9z" fill="#b8c6e2"/><path d="M11 5a2.5 2.5 0 0 1 2.5-2.5h19l4.5 4.5v14H11z" fill="#fff"/><rect x="15.5" y="6.5" width="14.5" height="2.2" rx="1" fill="#5c9ff2"/><rect x="15.5" y="10.5" width="14.5" height="2.2" rx="1" fill="#5c9ff2"/><path d="M1 14.5h22.5l5.5-5h17a4.5 4.5 0 0 1 4.5 4.5v18.5a4.5 4.5 0 0 1-4.5 4.5H5a4.5 4.5 0 0 1-4.5-4.5z" fill="#e7b862" stroke="#d39d42" stroke-width="1"/></svg><div style="position:absolute;left:894.13px;top:727.40px;font-size:34.0px;line-height:34.0px;font-weight:400;color:#e6e6e6;white-space:pre;transform:scaleX(0.9900);transform-origin:0 0;-webkit-text-stroke:0.9px #e6e6e6">Documentation</div><div style="position:absolute;left:1134.88px;top:729.15px;font-size:29.5px;line-height:29.5px;font-weight:400;color:#a8a8a8;white-space:pre;transform:scaleX(1.0012);transform-origin:0 0;;-webkit-text-stroke:0.45px #a8a8a8">(2 folders)</div><div style="position:absolute;left:2280.13px;top:727.40px;font-size:34.0px;line-height:34.0px;font-weight:400;color:#e6e6e6;white-space:pre;transform:scaleX(0.9648);transform-origin:0 0;;-webkit-text-stroke:0.45px #e6e6e6">0 Bytes</div><div style="position:absolute;left:2473.13px;top:727.40px;font-size:34.0px;line-height:34.0px;font-weight:400;color:#e6e6e6;white-space:pre;transform:scaleX(0.9977);transform-origin:0 0;;-webkit-text-stroke:0.45px #e6e6e6">admin</div><div style="position:absolute;left:2633px;top:713px;width:64px;height:64px;background:#f09d38;border-radius:11px 0 0 11px"></div><svg style="position:absolute;left:2644px;top:725px;" width="40" height="40" viewBox="0 0 24 24"><path fill="#fff" d="M20 6h-8l-2-2H4c-1.1 0-1.99.9-1.99 2L2 18c0 1.1.9 2 2 2h16c1.1 0 2-.9 2-2V8c0-1.1-.9-2-2-2zm-8 12v-3H8v-4h4V8l5 5-5 5z"/></svg><div style="position:absolute;left:2701px;top:713px;width:64px;height:64px;background:#2e6f95;border-radius:0"></div><svg style="position:absolute;left:2709.5px;top:722px;" width="45" height="45" viewBox="0 0 24 24"><path fill="#fff" d="M12 3c-4.97 0-9 4.03-9 9s4.03 9 9 9c.83 0 1.5-.67 1.5-1.5 0-.39-.15-.74-.39-1.01-.23-.26-.38-.61-.38-.99 0-.83.67-1.5 1.5-1.5H16c2.76 0 5-2.24 5-5 0-4.42-4.03-8-9-8zm-5.5 9c-.83 0-1.5-.67-1.5-1.5S5.67 9 6.5 9 8 9.67 8 10.5 7.33 12 6.5 12zm3-4C8.67 8 8 7.330 8 6.5S8.67 5 9.5 5s1.5.67 1.5 1.5S10.33 8 9.5 8zm5 0c-.83 0-1.5-.67-1.5-1.5S13.67 5 14.5 5s1.5.67 1.5 1.5S15.33 8 14.5 8zm3 4c-.83 0-1.5-.67-1.5-1.5S16.67 9 17.5 9s1.5.67 1.5 1.5-.67 1.5-1.5 1.5z"/></svg><div style="position:absolute;left:2769px;top:713px;width:64px;height:64px;background:#f4c342;border-radius:0"></div><svg style="position:absolute;left:2780px;top:725px;" width="40" height="40" viewBox="0 0 24 24"><path fill="#111" d="M18.41 5.8L17.2 4.59c-.78-.78-2.05-.78-2.83 0l-2.68 2.68L3 15.96V20h4.04l8.74-8.74 2.63-2.63c.79-.78.79-2.05 0-2.83zM6.21 18H5v-1.21l8.66-8.66 1.21 1.21L6.21 18zM11 20l4-4h6v4H11z"/></svg><div style="position:absolute;left:2837px;top:713px;width:64px;height:64px;background:#6c737c;border-radius:0 11px 11px 0"></div><svg style="position:absolute;left:2848px;top:725px;" width="40" height="40" viewBox="0 0 24 24"><path fill="#fff" d="M18 16.08c-.76 0-1.44.3-1.96.77L8.91 12.7c.05-.23.09-.46.09-.7s-.04-.47-.09-.7l7.05-4.11c.54.5 1.25.81 2.04.81 1.66 0 3-1.34 3-3s-1.34-3-3-3-3 1.34-3 3c0 .24.04.47.09.7L8.04 9.81C7.5 9.31 6.79 9 6 9c-1.66 0-3 1.34-3 3s1.34 3 3 3c.79 0 1.5-.31 2.04-.81l7.12 4.16c-.05.21-.08.43-.08.65 0 1.61 1.31 2.92 2.92 2.92 1.61 0 2.92-1.31 2.92-2.92s-1.31-2.92-2.92-2.92z"/></svg><svg style="position:absolute;left:822px;top:791px" width="51.0" height="43.0" viewBox="0 0 51 43"><path d="M3 12a5 5 0 0 1 5-5h17v23h25.5v8a5 5 0 0 1-5 5H8a5 5 0 0 1-5-5z" fill="#e86a5a"/><path d="M9 4.5a4 4 0 0 1 4-4h22a4 4 0 0 1 4 4v16H9z" fill="#b8c6e2"/><path d="M11 5a2.5 2.5 0 0 1 2.5-2.5h19l4.5 4.5v14H11z" fill="#fff"/><rect x="15.5" y="6.5" width="14.5" height="2.2" rx="1" fill="#5c9ff2"/><rect x="15.5" y="10.5" width="14.5" height="2.2" rx="1" fill="#5c9ff2"/><path d="M1 14.5h22.5l5.5-5h17a4.5 4.5 0 0 1 4.5 4.5v18.5a4.5 4.5 0 0 1-4.5 4.5H5a4.5 4.5 0 0 1-4.5-4.5z" fill="#cf3b25" stroke="#b83220" stroke-width="1"/></svg><div style="position:absolute;left:894.13px;top:797.40px;font-size:34.0px;line-height:34.0px;font-weight:400;color:#e6e6e6;white-space:pre;transform:scaleX(0.9705);transform-origin:0 0;-webkit-text-stroke:0.9px #e6e6e6">Finance</div><div style="position:absolute;left:1025.88px;top:799.15px;font-size:29.5px;line-height:29.5px;font-weight:400;color:#a8a8a8;white-space:pre;transform:scaleX(0.9936);transform-origin:0 0;;-webkit-text-stroke:0.45px #a8a8a8">(4 folders)</div><div style="position:absolute;left:2280.13px;top:797.40px;font-size:34.0px;line-height:34.0px;font-weight:400;color:#e6e6e6;white-space:pre;transform:scaleX(0.9648);transform-origin:0 0;;-webkit-text-stroke:0.45px #e6e6e6">0 Bytes</div><div style="position:absolute;left:2473.13px;top:797.40px;font-size:34.0px;line-height:34.0px;font-weight:400;color:#e6e6e6;white-space:pre;transform:scaleX(0.9977);transform-origin:0 0;;-webkit-text-stroke:0.45px #e6e6e6">admin</div><div style="position:absolute;left:2633px;top:783px;width:64px;height:64px;background:#f09d38;border-radius:11px 0 0 11px"></div><svg style="position:absolute;left:2644px;top:795px;" width="40" height="40" viewBox="0 0 24 24"><path fill="#fff" d="M20 6h-8l-2-2H4c-1.1 0-1.99.9-1.99 2L2 18c0 1.1.9 2 2 2h16c1.1 0 2-.9 2-2V8c0-1.1-.9-2-2-2zm-8 12v-3H8v-4h4V8l5 5-5 5z"/></svg><div style="position:absolute;left:2701px;top:783px;width:64px;height:64px;background:#2e6f95;border-radius:0"></div><svg style="position:absolute;left:2709.5px;top:792px;" width="45" height="45" viewBox="0 0 24 24"><path fill="#fff" d="M12 3c-4.97 0-9 4.03-9 9s4.03 9 9 9c.83 0 1.5-.67 1.5-1.5 0-.39-.15-.74-.39-1.01-.23-.26-.38-.61-.38-.99 0-.83.67-1.5 1.5-1.5H16c2.76 0 5-2.24 5-5 0-4.42-4.03-8-9-8zm-5.5 9c-.83 0-1.5-.67-1.5-1.5S5.67 9 6.5 9 8 9.67 8 10.5 7.33 12 6.5 12zm3-4C8.67 8 8 7.330 8 6.5S8.67 5 9.5 5s1.5.67 1.5 1.5S10.33 8 9.5 8zm5 0c-.83 0-1.5-.67-1.5-1.5S13.67 5 14.5 5s1.5.67 1.5 1.5S15.33 8 14.5 8zm3 4c-.83 0-1.5-.67-1.5-1.5S16.67 9 17.5 9s1.5.67 1.5 1.5-.67 1.5-1.5 1.5z"/></svg><div style="position:absolute;left:2769px;top:783px;width:64px;height:64px;background:#f4c342;border-radius:0"></div><svg style="position:absolute;left:2780px;top:795px;" width="40" height="40" viewBox="0 0 24 24"><path fill="#111" d="M18.41 5.8L17.2 4.59c-.78-.78-2.05-.78-2.83 0l-2.68 2.68L3 15.96V20h4.04l8.74-8.74 2.63-2.63c.79-.78.79-2.05 0-2.83zM6.21 18H5v-1.21l8.66-8.66 1.21 1.21L6.21 18zM11 20l4-4h6v4H11z"/></svg><div style="position:absolute;left:2837px;top:783px;width:64px;height:64px;background:#6c737c;border-radius:0 11px 11px 0"></div><svg style="position:absolute;left:2848px;top:795px;" width="40" height="40" viewBox="0 0 24 24"><path fill="#fff" d="M18 16.08c-.76 0-1.44.3-1.96.77L8.91 12.7c.05-.23.09-.46.09-.7s-.04-.47-.09-.7l7.05-4.11c.54.5 1.25.81 2.04.81 1.66 0 3-1.34 3-3s-1.34-3-3-3-3 1.34-3 3c0 .24.04.47.09.7L8.04 9.81C7.5 9.31 6.79 9 6 9c-1.66 0-3 1.34-3 3s1.34 3 3 3c.79 0 1.5-.31 2.04-.81l7.12 4.16c-.05.21-.08.43-.08.65 0 1.61 1.31 2.92 2.92 2.92 1.61 0 2.92-1.31 2.92-2.92s-1.31-2.92-2.92-2.92z"/></svg><svg style="position:absolute;left:822px;top:861px" width="51.0" height="43.0" viewBox="0 0 51 43"><path d="M7 0h13l5 4.5h20.5a5 5 0 0 1 5 5V38a5 5 0 0 1-5 5H8a5 5 0 0 1-5-5V4a4 4 0 0 1 4-4z" fill="#f5d7a1"/><path d="M1 14.5h22.5l5.5-5h17a4.5 4.5 0 0 1 4.5 4.5v18.5a4.5 4.5 0 0 1-4.5 4.5H5a4.5 4.5 0 0 1-4.5-4.5z" fill="#e7b862" stroke="#d39d42" stroke-width="1"/></svg><div style="position:absolute;left:894.13px;top:867.40px;font-size:34.0px;line-height:34.0px;font-weight:400;color:#e6e6e6;white-space:pre;transform:scaleX(1.0031);transform-origin:0 0;-webkit-text-stroke:0.9px #e6e6e6">Meetings</div><div style="position:absolute;left:1046.88px;top:869.15px;font-size:29.5px;line-height:29.5px;font-weight:400;color:#a8a8a8;white-space:pre;transform:scaleX(0.9984);transform-origin:0 0;;-webkit-text-stroke:0.45px #a8a8a8">(0 items)</div><div style="position:absolute;left:2280.13px;top:867.40px;font-size:34.0px;line-height:34.0px;font-weight:400;color:#e6e6e6;white-space:pre;transform:scaleX(0.9648);transform-origin:0 0;;-webkit-text-stroke:0.45px #e6e6e6">0 Bytes</div><div style="position:absolute;left:2473.13px;top:867.40px;font-size:34.0px;line-height:34.0px;font-weight:400;color:#e6e6e6;white-space:pre;transform:scaleX(0.9977);transform-origin:0 0;;-webkit-text-stroke:0.45px #e6e6e6">admin</div><div style="position:absolute;left:2633px;top:853px;width:64px;height:64px;background:#f09d38;border-radius:11px 0 0 11px"></div><svg style="position:absolute;left:2644px;top:865px;" width="40" height="40" viewBox="0 0 24 24"><path fill="#fff" d="M20 6h-8l-2-2H4c-1.1 0-1.99.9-1.99 2L2 18c0 1.1.9 2 2 2h16c1.1 0 2-.9 2-2V8c0-1.1-.9-2-2-2zm-8 12v-3H8v-4h4V8l5 5-5 5z"/></svg><div style="position:absolute;left:2701px;top:853px;width:64px;height:64px;background:#2e6f95;border-radius:0"></div><svg style="position:absolute;left:2709.5px;top:862px;" width="45" height="45" viewBox="0 0 24 24"><path fill="#fff" d="M12 3c-4.97 0-9 4.03-9 9s4.03 9 9 9c.83 0 1.5-.67 1.5-1.5 0-.39-.15-.74-.39-1.01-.23-.26-.38-.61-.38-.99 0-.83.67-1.5 1.5-1.5H16c2.76 0 5-2.24 5-5 0-4.42-4.03-8-9-8zm-5.5 9c-.83 0-1.5-.67-1.5-1.5S5.67 9 6.5 9 8 9.67 8 10.5 7.33 12 6.5 12zm3-4C8.67 8 8 7.330 8 6.5S8.67 5 9.5 5s1.5.67 1.5 1.5S10.33 8 9.5 8zm5 0c-.83 0-1.5-.67-1.5-1.5S13.67 5 14.5 5s1.5.67 1.5 1.5S15.33 8 14.5 8zm3 4c-.83 0-1.5-.67-1.5-1.5S16.67 9 17.5 9s1.5.67 1.5 1.5-.67 1.5-1.5 1.5z"/></svg><div style="position:absolute;left:2769px;top:853px;width:64px;height:64px;background:#f4c342;border-radius:0"></div><svg style="position:absolute;left:2780px;top:865px;" width="40" height="40" viewBox="0 0 24 24"><path fill="#111" d="M18.41 5.8L17.2 4.59c-.78-.78-2.05-.78-2.83 0l-2.68 2.68L3 15.96V20h4.04l8.74-8.74 2.63-2.63c.79-.78.79-2.05 0-2.83zM6.21 18H5v-1.21l8.66-8.66 1.21 1.21L6.21 18zM11 20l4-4h6v4H11z"/></svg><div style="position:absolute;left:2837px;top:853px;width:64px;height:64px;background:#6c737c;border-radius:0 11px 11px 0"></div><svg style="position:absolute;left:2848px;top:865px;" width="40" height="40" viewBox="0 0 24 24"><path fill="#fff" d="M18 16.08c-.76 0-1.44.3-1.96.77L8.91 12.7c.05-.23.09-.46.09-.7s-.04-.47-.09-.7l7.05-4.11c.54.5 1.25.81 2.04.81 1.66 0 3-1.34 3-3s-1.34-3-3-3-3 1.34-3 3c0 .24.04.47.09.7L8.04 9.81C7.5 9.31 6.79 9 6 9c-1.66 0-3 1.34-3 3s1.34 3 3 3c.79 0 1.5-.31 2.04-.81l7.12 4.16c-.05.21-.08.43-.08.65 0 1.61 1.31 2.92 2.92 2.92 1.61 0 2.92-1.31 2.92-2.92s-1.31-2.92-2.92-2.92z"/></svg><svg style="position:absolute;left:822px;top:931px" width="51.0" height="43.0" viewBox="0 0 51 43"><path d="M3 12a5 5 0 0 1 5-5h17v23h25.5v8a5 5 0 0 1-5 5H8a5 5 0 0 1-5-5z" fill="#a6d38a"/><path d="M9 4.5a4 4 0 0 1 4-4h22a4 4 0 0 1 4 4v16H9z" fill="#b8c6e2"/><path d="M11 5a2.5 2.5 0 0 1 2.5-2.5h19l4.5 4.5v14H11z" fill="#fff"/><rect x="15.5" y="6.5" width="14.5" height="2.2" rx="1" fill="#5c9ff2"/><rect x="15.5" y="10.5" width="14.5" height="2.2" rx="1" fill="#5c9ff2"/><path d="M1 14.5h22.5l5.5-5h17a4.5 4.5 0 0 1 4.5 4.5v18.5a4.5 4.5 0 0 1-4.5 4.5H5a4.5 4.5 0 0 1-4.5-4.5z" fill="#6c9e44" stroke="#5a8a38" stroke-width="1"/></svg><div style="position:absolute;left:894.13px;top:937.40px;font-size:34.0px;line-height:34.0px;font-weight:400;color:#e6e6e6;white-space:pre;transform:scaleX(0.9802);transform-origin:0 0;-webkit-text-stroke:0.9px #e6e6e6">Process</div><div style="position:absolute;left:1028.88px;top:939.15px;font-size:29.5px;line-height:29.5px;font-weight:400;color:#a8a8a8;white-space:pre;transform:scaleX(1.0120);transform-origin:0 0;;-webkit-text-stroke:0.45px #a8a8a8">(1 file)</div><div style="position:absolute;left:2280.13px;top:937.40px;font-size:34.0px;line-height:34.0px;font-weight:400;color:#e6e6e6;white-space:pre;transform:scaleX(1.1192);transform-origin:0 0;;-webkit-text-stroke:0.45px #e6e6e6">8.88 KB</div><div style="position:absolute;left:2473.13px;top:937.40px;font-size:34.0px;line-height:34.0px;font-weight:400;color:#e6e6e6;white-space:pre;transform:scaleX(0.9977);transform-origin:0 0;;-webkit-text-stroke:0.45px #e6e6e6">admin</div><div style="position:absolute;left:2633px;top:923px;width:64px;height:64px;background:#f09d38;border-radius:11px 0 0 11px"></div><svg style="position:absolute;left:2644px;top:935px;" width="40" height="40" viewBox="0 0 24 24"><path fill="#fff" d="M20 6h-8l-2-2H4c-1.1 0-1.99.9-1.99 2L2 18c0 1.1.9 2 2 2h16c1.1 0 2-.9 2-2V8c0-1.1-.9-2-2-2zm-8 12v-3H8v-4h4V8l5 5-5 5z"/></svg><div style="position:absolute;left:2701px;top:923px;width:64px;height:64px;background:#2e6f95;border-radius:0"></div><svg style="position:absolute;left:2709.5px;top:932px;" width="45" height="45" viewBox="0 0 24 24"><path fill="#fff" d="M12 3c-4.97 0-9 4.03-9 9s4.03 9 9 9c.83 0 1.5-.67 1.5-1.5 0-.39-.15-.74-.39-1.01-.23-.26-.38-.61-.38-.99 0-.83.67-1.5 1.5-1.5H16c2.76 0 5-2.24 5-5 0-4.42-4.03-8-9-8zm-5.5 9c-.83 0-1.5-.67-1.5-1.5S5.67 9 6.5 9 8 9.67 8 10.5 7.33 12 6.5 12zm3-4C8.67 8 8 7.330 8 6.5S8.67 5 9.5 5s1.5.67 1.5 1.5S10.33 8 9.5 8zm5 0c-.83 0-1.5-.67-1.5-1.5S13.67 5 14.5 5s1.5.67 1.5 1.5S15.33 8 14.5 8zm3 4c-.83 0-1.5-.67-1.5-1.5S16.67 9 17.5 9s1.5.67 1.5 1.5-.67 1.5-1.5 1.5z"/></svg><div style="position:absolute;left:2769px;top:923px;width:64px;height:64px;background:#f4c342;border-radius:0"></div><svg style="position:absolute;left:2780px;top:935px;" width="40" height="40" viewBox="0 0 24 24"><path fill="#111" d="M18.41 5.8L17.2 4.59c-.78-.78-2.05-.78-2.83 0l-2.68 2.68L3 15.96V20h4.04l8.74-8.74 2.63-2.63c.79-.78.79-2.05 0-2.83zM6.21 18H5v-1.21l8.66-8.66 1.21 1.21L6.21 18zM11 20l4-4h6v4H11z"/></svg><div style="position:absolute;left:2837px;top:923px;width:64px;height:64px;background:#6c737c;border-radius:0 11px 11px 0"></div><svg style="position:absolute;left:2848px;top:935px;" width="40" height="40" viewBox="0 0 24 24"><path fill="#fff" d="M18 16.08c-.76 0-1.44.3-1.96.77L8.91 12.7c.05-.23.09-.46.09-.7s-.04-.47-.09-.7l7.05-4.11c.54.5 1.25.81 2.04.81 1.66 0 3-1.34 3-3s-1.34-3-3-3-3 1.34-3 3c0 .24.04.47.09.7L8.04 9.81C7.5 9.31 6.79 9 6 9c-1.66 0-3 1.34-3 3s1.34 3 3 3c.79 0 1.5-.31 2.04-.81l7.12 4.16c-.05.21-.08.43-.08.65 0 1.61 1.31 2.92 2.92 2.92 1.61 0 2.92-1.31 2.92-2.92s-1.31-2.92-2.92-2.92z"/></svg><svg style="position:absolute;left:822px;top:1001px" width="51.0" height="43.0" viewBox="0 0 51 43"><path d="M7 0h13l5 4.5h20.5a5 5 0 0 1 5 5V38a5 5 0 0 1-5 5H8a5 5 0 0 1-5-5V4a4 4 0 0 1 4-4z" fill="#f5d7a1"/><path d="M1 14.5h22.5l5.5-5h17a4.5 4.5 0 0 1 4.5 4.5v18.5a4.5 4.5 0 0 1-4.5 4.5H5a4.5 4.5 0 0 1-4.5-4.5z" fill="#e7b862" stroke="#d39d42" stroke-width="1"/></svg><div style="position:absolute;left:894.13px;top:1007.40px;font-size:34.0px;line-height:34.0px;font-weight:400;color:#e6e6e6;white-space:pre;transform:scaleX(1.0047);transform-origin:0 0;-webkit-text-stroke:0.9px #e6e6e6">Projects</div><div style="position:absolute;left:1031.88px;top:1009.15px;font-size:29.5px;line-height:29.5px;font-weight:400;color:#a8a8a8;white-space:pre;transform:scaleX(0.9932);transform-origin:0 0;;-webkit-text-stroke:0.45px #a8a8a8">(0 items)</div><div style="position:absolute;left:2280.13px;top:1007.40px;font-size:34.0px;line-height:34.0px;font-weight:400;color:#e6e6e6;white-space:pre;transform:scaleX(0.9648);transform-origin:0 0;;-webkit-text-stroke:0.45px #e6e6e6">0 Bytes</div><div style="position:absolute;left:2473.13px;top:1007.40px;font-size:34.0px;line-height:34.0px;font-weight:400;color:#e6e6e6;white-space:pre;transform:scaleX(0.9977);transform-origin:0 0;;-webkit-text-stroke:0.45px #e6e6e6">admin</div><div style="position:absolute;left:2633px;top:993px;width:64px;height:64px;background:#f09d38;border-radius:11px 0 0 11px"></div><svg style="position:absolute;left:2644px;top:1005px;" width="40" height="40" viewBox="0 0 24 24"><path fill="#fff" d="M20 6h-8l-2-2H4c-1.1 0-1.99.9-1.99 2L2 18c0 1.1.9 2 2 2h16c1.1 0 2-.9 2-2V8c0-1.1-.9-2-2-2zm-8 12v-3H8v-4h4V8l5 5-5 5z"/></svg><div style="position:absolute;left:2701px;top:993px;width:64px;height:64px;background:#2e6f95;border-radius:0"></div><svg style="position:absolute;left:2709.5px;top:1002px;" width="45" height="45" viewBox="0 0 24 24"><path fill="#fff" d="M12 3c-4.97 0-9 4.03-9 9s4.03 9 9 9c.83 0 1.5-.67 1.5-1.5 0-.39-.15-.74-.39-1.01-.23-.26-.38-.61-.38-.99 0-.83.67-1.5 1.5-1.5H16c2.76 0 5-2.24 5-5 0-4.42-4.03-8-9-8zm-5.5 9c-.83 0-1.5-.67-1.5-1.5S5.67 9 6.5 9 8 9.67 8 10.5 7.33 12 6.5 12zm3-4C8.67 8 8 7.330 8 6.5S8.67 5 9.5 5s1.5.67 1.5 1.5S10.33 8 9.5 8zm5 0c-.83 0-1.5-.67-1.5-1.5S13.67 5 14.5 5s1.5.67 1.5 1.5S15.33 8 14.5 8zm3 4c-.83 0-1.5-.67-1.5-1.5S16.67 9 17.5 9s1.5.67 1.5 1.5-.67 1.5-1.5 1.5z"/></svg><div style="position:absolute;left:2769px;top:993px;width:64px;height:64px;background:#f4c342;border-radius:0"></div><svg style="position:absolute;left:2780px;top:1005px;" width="40" height="40" viewBox="0 0 24 24"><path fill="#111" d="M18.41 5.8L17.2 4.59c-.78-.78-2.05-.78-2.83 0l-2.68 2.68L3 15.96V20h4.04l8.74-8.74 2.63-2.63c.79-.78.79-2.05 0-2.83zM6.21 18H5v-1.21l8.66-8.66 1.21 1.21L6.21 18zM11 20l4-4h6v4H11z"/></svg><div style="position:absolute;left:2837px;top:993px;width:64px;height:64px;background:#6c737c;border-radius:0 11px 11px 0"></div><svg style="position:absolute;left:2848px;top:1005px;" width="40" height="40" viewBox="0 0 24 24"><path fill="#fff" d="M18 16.08c-.76 0-1.44.3-1.96.77L8.91 12.7c.05-.23.09-.46.09-.7s-.04-.47-.09-.7l7.05-4.11c.54.5 1.25.81 2.04.81 1.66 0 3-1.34 3-3s-1.34-3-3-3-3 1.34-3 3c0 .24.04.47.09.7L8.04 9.81C7.5 9.31 6.79 9 6 9c-1.66 0-3 1.34-3 3s1.34 3 3 3c.79 0 1.5-.31 2.04-.81l7.12 4.16c-.05.21-.08.43-.08.65 0 1.61 1.31 2.92 2.92 2.92 1.61 0 2.92-1.31 2.92-2.92s-1.31-2.92-2.92-2.92z"/></svg><svg style="position:absolute;left:822px;top:1071px" width="51.0" height="43.0" viewBox="0 0 51 43"><path d="M7 0h13l5 4.5h20.5a5 5 0 0 1 5 5V38a5 5 0 0 1-5 5H8a5 5 0 0 1-5-5V4a4 4 0 0 1 4-4z" fill="#8ab0f5"/><path d="M1 14.5h22.5l5.5-5h17a4.5 4.5 0 0 1 4.5 4.5v18.5a4.5 4.5 0 0 1-4.5 4.5H5a4.5 4.5 0 0 1-4.5-4.5z" fill="#4a80ea" stroke="#3a6fd8" stroke-width="1"/></svg><div style="position:absolute;left:894.13px;top:1077.40px;font-size:34.0px;line-height:34.0px;font-weight:400;color:#e6e6e6;white-space:pre;transform:scaleX(0.9931);transform-origin:0 0;-webkit-text-stroke:0.9px #e6e6e6">Reporting</div><div style="position:absolute;left:1054.88px;top:1079.15px;font-size:29.5px;line-height:29.5px;font-weight:400;color:#a8a8a8;white-space:pre;transform:scaleX(1.0019);transform-origin:0 0;;-webkit-text-stroke:0.45px #a8a8a8">(0 items)</div><div style="position:absolute;left:2280.13px;top:1077.40px;font-size:34.0px;line-height:34.0px;font-weight:400;color:#e6e6e6;white-space:pre;transform:scaleX(0.9648);transform-origin:0 0;;-webkit-text-stroke:0.45px #e6e6e6">0 Bytes</div><div style="position:absolute;left:2473.13px;top:1077.40px;font-size:34.0px;line-height:34.0px;font-weight:400;color:#e6e6e6;white-space:pre;transform:scaleX(0.9977);transform-origin:0 0;;-webkit-text-stroke:0.45px #e6e6e6">admin</div><div style="position:absolute;left:2633px;top:1063px;width:64px;height:64px;background:#f09d38;border-radius:11px 0 0 11px"></div><svg style="position:absolute;left:2644px;top:1075px;" width="40" height="40" viewBox="0 0 24 24"><path fill="#fff" d="M20 6h-8l-2-2H4c-1.1 0-1.99.9-1.99 2L2 18c0 1.1.9 2 2 2h16c1.1 0 2-.9 2-2V8c0-1.1-.9-2-2-2zm-8 12v-3H8v-4h4V8l5 5-5 5z"/></svg><div style="position:absolute;left:2701px;top:1063px;width:64px;height:64px;background:#2e6f95;border-radius:0"></div><svg style="position:absolute;left:2709.5px;top:1072px;" width="45" height="45" viewBox="0 0 24 24"><path fill="#fff" d="M12 3c-4.97 0-9 4.03-9 9s4.03 9 9 9c.83 0 1.5-.67 1.5-1.5 0-.39-.15-.74-.39-1.01-.23-.26-.38-.61-.38-.99 0-.83.67-1.5 1.5-1.5H16c2.76 0 5-2.24 5-5 0-4.42-4.03-8-9-8zm-5.5 9c-.83 0-1.5-.67-1.5-1.5S5.67 9 6.5 9 8 9.67 8 10.5 7.33 12 6.5 12zm3-4C8.67 8 8 7.330 8 6.5S8.67 5 9.5 5s1.5.67 1.5 1.5S10.33 8 9.5 8zm5 0c-.83 0-1.5-.67-1.5-1.5S13.67 5 14.5 5s1.5.67 1.5 1.5S15.33 8 14.5 8zm3 4c-.83 0-1.5-.67-1.5-1.5S16.67 9 17.5 9s1.5.67 1.5 1.5-.67 1.5-1.5 1.5z"/></svg><div style="position:absolute;left:2769px;top:1063px;width:64px;height:64px;background:#f4c342;border-radius:0"></div><svg style="position:absolute;left:2780px;top:1075px;" width="40" height="40" viewBox="0 0 24 24"><path fill="#111" d="M18.41 5.8L17.2 4.59c-.78-.78-2.05-.78-2.83 0l-2.68 2.68L3 15.96V20h4.04l8.74-8.74 2.63-2.63c.79-.78.79-2.05 0-2.83zM6.21 18H5v-1.21l8.66-8.66 1.21 1.21L6.21 18zM11 20l4-4h6v4H11z"/></svg><div style="position:absolute;left:2837px;top:1063px;width:64px;height:64px;background:#6c737c;border-radius:0 11px 11px 0"></div><svg style="position:absolute;left:2848px;top:1075px;" width="40" height="40" viewBox="0 0 24 24"><path fill="#fff" d="M18 16.08c-.76 0-1.44.3-1.96.77L8.91 12.7c.05-.23.09-.46.09-.7s-.04-.47-.09-.7l7.05-4.11c.54.5 1.25.81 2.04.81 1.66 0 3-1.34 3-3s-1.34-3-3-3-3 1.34-3 3c0 .24.04.47.09.7L8.04 9.81C7.5 9.31 6.79 9 6 9c-1.66 0-3 1.34-3 3s1.34 3 3 3c.79 0 1.5-.31 2.04-.81l7.12 4.16c-.05.21-.08.43-.08.65 0 1.61 1.31 2.92 2.92 2.92 1.61 0 2.92-1.31 2.92-2.92s-1.31-2.92-2.92-2.92z"/></svg><svg style="position:absolute;left:822px;top:1141px" width="51.0" height="43.0" viewBox="0 0 51 43"><path d="M3 12a5 5 0 0 1 5-5h17v23h25.5v8a5 5 0 0 1-5 5H8a5 5 0 0 1-5-5z" fill="#f5d7a1"/><path d="M9 4.5a4 4 0 0 1 4-4h22a4 4 0 0 1 4 4v16H9z" fill="#b8c6e2"/><path d="M11 5a2.5 2.5 0 0 1 2.5-2.5h19l4.5 4.5v14H11z" fill="#fff"/><rect x="15.5" y="6.5" width="14.5" height="2.2" rx="1" fill="#5c9ff2"/><rect x="15.5" y="10.5" width="14.5" height="2.2" rx="1" fill="#5c9ff2"/><path d="M1 14.5h22.5l5.5-5h17a4.5 4.5 0 0 1 4.5 4.5v18.5a4.5 4.5 0 0 1-4.5 4.5H5a4.5 4.5 0 0 1-4.5-4.5z" fill="#e7b862" stroke="#d39d42" stroke-width="1"/></svg><div style="position:absolute;left:894.13px;top:1147.40px;font-size:34.0px;line-height:34.0px;font-weight:400;color:#e6e6e6;white-space:pre;transform:scaleX(1.0564);transform-origin:0 0;-webkit-text-stroke:0.9px #e6e6e6">root</div><div style="position:absolute;left:970.38px;top:1149.15px;font-size:29.5px;line-height:29.5px;font-weight:400;color:#a8a8a8;white-space:pre;transform:scaleX(0.9810);transform-origin:0 0;;-webkit-text-stroke:0.45px #a8a8a8">(8 folders, 7 files)</div><div style="position:absolute;left:2280.13px;top:1147.40px;font-size:34.0px;line-height:34.0px;font-weight:400;color:#e6e6e6;white-space:pre;transform:scaleX(0.9647);transform-origin:0 0;;-webkit-text-stroke:0.45px #e6e6e6">10.12 MB</div><div style="position:absolute;left:2473.13px;top:1147.40px;font-size:34.0px;line-height:34.0px;font-weight:400;color:#e6e6e6;white-space:pre;transform:scaleX(0.9977);transform-origin:0 0;;-webkit-text-stroke:0.45px #e6e6e6">admin</div><div style="position:absolute;left:2633px;top:1133px;width:64px;height:64px;background:#8a6d42;border-radius:11px 0 0 11px"></div><svg style="position:absolute;left:2644px;top:1145px;" width="40" height="40" viewBox="0 0 24 24"><path fill="#9a9a9a" d="M20 6h-8l-2-2H4c-1.1 0-1.99.9-1.99 2L2 18c0 1.1.9 2 2 2h16c1.1 0 2-.9 2-2V8c0-1.1-.9-2-2-2zm-8 12v-3H8v-4h4V8l5 5-5 5z"/></svg><div style="position:absolute;left:2701px;top:1133px;width:64px;height:64px;background:#284a5c;border-radius:0"></div><svg style="position:absolute;left:2709.5px;top:1142px;" width="45" height="45" viewBox="0 0 24 24"><path fill="#9a9a9a" d="M12 3c-4.97 0-9 4.03-9 9s4.03 9 9 9c.83 0 1.5-.67 1.5-1.5 0-.39-.15-.74-.39-1.01-.23-.26-.38-.61-.38-.99 0-.83.67-1.5 1.5-1.5H16c2.76 0 5-2.24 5-5 0-4.42-4.03-8-9-8zm-5.5 9c-.83 0-1.5-.67-1.5-1.5S5.67 9 6.5 9 8 9.67 8 10.5 7.33 12 6.5 12zm3-4C8.67 8 8 7.330 8 6.5S8.67 5 9.5 5s1.5.67 1.5 1.5S10.33 8 9.5 8zm5 0c-.83 0-1.5-.67-1.5-1.5S13.67 5 14.5 5s1.5.67 1.5 1.5S15.33 8 14.5 8zm3 4c-.83 0-1.5-.67-1.5-1.5S16.67 9 17.5 9s1.5.67 1.5 1.5-.67 1.5-1.5 1.5z"/></svg><div style="position:absolute;left:2769px;top:1133px;width:64px;height:64px;background:#8b7232;border-radius:0"></div><svg style="position:absolute;left:2780px;top:1145px;" width="40" height="40" viewBox="0 0 24 24"><path fill="#111" d="M18.41 5.8L17.2 4.59c-.78-.78-2.05-.78-2.83 0l-2.68 2.68L3 15.96V20h4.04l8.74-8.74 2.63-2.63c.79-.78.79-2.05 0-2.83zM6.21 18H5v-1.21l8.66-8.66 1.21 1.21L6.21 18zM11 20l4-4h6v4H11z"/></svg><div style="position:absolute;left:2837px;top:1133px;width:64px;height:64px;background:#4a4c51;border-radius:0 11px 11px 0"></div><svg style="position:absolute;left:2848px;top:1145px;" width="40" height="40" viewBox="0 0 24 24"><path fill="#9a9a9a" d="M18 16.08c-.76 0-1.44.3-1.96.77L8.91 12.7c.05-.23.09-.46.09-.7s-.04-.47-.09-.7l7.05-4.11c.54.5 1.25.81 2.04.81 1.66 0 3-1.34 3-3s-1.34-3-3-3-3 1.34-3 3c0 .24.04.47.09.7L8.04 9.81C7.5 9.31 6.79 9 6 9c-1.66 0-3 1.34-3 3s1.34 3 3 3c.79 0 1.5-.31 2.04-.81l7.12 4.16c-.05.21-.08.43-.08.65 0 1.61 1.31 2.92 2.92 2.92 1.61 0 2.92-1.31 2.92-2.92s-1.31-2.92-2.92-2.92z"/></svg><div style="position:absolute;left:832.5px;top:1224px;width:23.5px;height:23.5px;border:3px solid #9a9a9a;border-radius:6px;box-sizing:border-box"></div><div style="position:absolute;left:894.13px;top:1216.00px;font-size:34.0px;line-height:34.0px;font-weight:400;color:#e6e6e6;white-space:pre;transform:scaleX(0.9730);transform-origin:0 0;;-webkit-text-stroke:0.45px #e6e6e6">FileRise-Mobile.gif</div><div style="position:absolute;left:1597.13px;top:1216.00px;font-size:34.0px;line-height:34.0px;font-weight:400;color:#e6e6e6;white-space:pre;transform:scaleX(1.0110);transform-origin:0 0;;-webkit-text-stroke:0.45px #e6e6e6">11/23/25 01:51AM</div><div style="position:absolute;left:1938.13px;top:1216.00px;font-size:34.0px;line-height:34.0px;font-weight:400;color:#e6e6e6;white-space:pre;transform:scaleX(1.0147);transform-origin:0 0;;-webkit-text-stroke:0.45px #e6e6e6">11/23/25 01:51AM</div><div style="position:absolute;left:2280.13px;top:1216.00px;font-size:34.0px;line-height:34.0px;font-weight:400;color:#e6e6e6;white-space:pre;transform:scaleX(0.9465);transform-origin:0 0;;-webkit-text-stroke:0.45px #e6e6e6">828.3 KB</div><div style="position:absolute;left:2473.13px;top:1216.00px;font-size:34.0px;line-height:34.0px;font-weight:400;color:#e6e6e6;white-space:pre;transform:scaleX(0.9977);transform-origin:0 0;;-webkit-text-stroke:0.45px #e6e6e6">admin</div><div style="position:absolute;left:2633px;top:1203px;width:64px;height:64px;background:#55a453;border-radius:11px 0 0 11px"></div><svg style="position:absolute;left:2644px;top:1215px;" width="40" height="40" viewBox="0 0 24 24"><path fill="#fff" d="M19 9h-4V3H9v6H5l7 7 7-7zM5 18v2h14v-2H5z"/></svg><div style="position:absolute;left:2701px;top:1203px;width:64px;height:64px;background:#4aa0b5;border-radius:0"></div><svg style="position:absolute;left:2712px;top:1215px;" width="40" height="40" viewBox="0 0 24 24"><path fill="#fff" d="M21 19V5c0-1.1-.9-2-2-2H5c-1.1 0-2 .9-2 2v14c0 1.1.9 2 2 2h14c1.1 0 2-.9 2-2zM8.5 13.5l2.5 3.01L14.5 12l4.5 6H5l3.5-4.5z"/></svg><div style="position:absolute;left:2769px;top:1203px;width:64px;height:64px;background:#f4c342;border-radius:0"></div><svg style="position:absolute;left:2780px;top:1215px;" width="40" height="40" viewBox="0 0 24 24"><path fill="#111" d="M18.41 5.8L17.2 4.59c-.78-.78-2.05-.78-2.83 0l-2.68 2.68L3 15.96V20h4.04l8.74-8.74 2.63-2.63c.79-.78.79-2.05 0-2.83zM6.21 18H5v-1.21l8.66-8.66 1.21 1.21L6.21 18zM11 20l4-4h6v4H11z"/></svg><div style="position:absolute;left:2837px;top:1203px;width:64px;height:64px;background:#6c737c;border-radius:0 11px 11px 0"></div><svg style="position:absolute;left:2848px;top:1215px;" width="40" height="40" viewBox="0 0 24 24"><path fill="#fff" d="M18 16.08c-.76 0-1.44.3-1.96.77L8.91 12.7c.05-.23.09-.46.09-.7s-.04-.47-.09-.7l7.05-4.11c.54.5 1.25.81 2.04.81 1.66 0 3-1.34 3-3s-1.34-3-3-3-3 1.34-3 3c0 .24.04.47.09.7L8.04 9.81C7.5 9.31 6.79 9 6 9c-1.66 0-3 1.34-3 3s1.34 3 3 3c.79 0 1.5-.31 2.04-.81l7.12 4.16c-.05.21-.08.43-.08.65 0 1.61 1.31 2.92 2.92 2.92 1.61 0 2.92-1.31 2.92-2.92s-1.31-2.92-2.92-2.92z"/></svg><div style="position:absolute;left:832.5px;top:1294px;width:23.5px;height:23.5px;border:3px solid #9a9a9a;border-radius:6px;box-sizing:border-box"></div><div style="position:absolute;left:894.13px;top:1286.00px;font-size:34.0px;line-height:34.0px;font-weight:400;color:#e6e6e6;white-space:pre;transform:scaleX(0.9172);transform-origin:0 0;;-webkit-text-stroke:0.45px #e6e6e6">README.md</div><div style="position:absolute;left:1597.13px;top:1286.00px;font-size:34.0px;line-height:34.0px;font-weight:400;color:#e6e6e6;white-space:pre;transform:scaleX(1.0110);transform-origin:0 0;;-webkit-text-stroke:0.45px #e6e6e6">11/23/25 01:49AM</div><div style="position:absolute;left:1938.13px;top:1286.00px;font-size:34.0px;line-height:34.0px;font-weight:400;color:#e6e6e6;white-space:pre;transform:scaleX(1.0147);transform-origin:0 0;;-webkit-text-stroke:0.45px #e6e6e6">11/23/25 01:49AM</div><div style="position:absolute;left:2280.13px;top:1286.00px;font-size:34.0px;line-height:34.0px;font-weight:400;color:#e6e6e6;white-space:pre;transform:scaleX(0.9346);transform-origin:0 0;;-webkit-text-stroke:0.45px #e6e6e6">8.0 KB</div><div style="position:absolute;left:2473.13px;top:1286.00px;font-size:34.0px;line-height:34.0px;font-weight:400;color:#e6e6e6;white-space:pre;transform:scaleX(0.9977);transform-origin:0 0;;-webkit-text-stroke:0.45px #e6e6e6">admin</div><div style="position:absolute;left:2633px;top:1273px;width:64px;height:64px;background:#55a453;border-radius:11px 0 0 11px"></div><svg style="position:absolute;left:2644px;top:1285px;" width="40" height="40" viewBox="0 0 24 24"><path fill="#fff" d="M19 9h-4V3H9v6H5l7 7 7-7zM5 18v2h14v-2H5z"/></svg><div style="position:absolute;left:2701px;top:1273px;width:64px;height:64px;background:#3778f2;border-radius:0;border:2px solid #6a6a6a;box-sizing:border-box"></div><svg style="position:absolute;left:2712px;top:1285px;" width="40" height="40" viewBox="0 0 24 24"><path fill="#fff" d="M3 17.25V21h3.75L17.81 9.94l-3.75-3.75L3 17.25zM20.71 7.04c.39-.39.39-1.02 0-1.41l-2.34-2.34c-.39-.39-1.02-.39-1.41 0l-1.83 1.83 3.75 3.75 1.83-1.83z"/></svg><div style="position:absolute;left:2769px;top:1273px;width:64px;height:64px;background:#f4c342;border-radius:0"></div><svg style="position:absolute;left:2780px;top:1285px;" width="40" height="40" viewBox="0 0 24 24"><path fill="#111" d="M18.41 5.8L17.2 4.59c-.78-.78-2.05-.78-2.83 0l-2.68 2.68L3 15.96V20h4.04l8.74-8.74 2.63-2.63c.79-.78.79-2.05 0-2.83zM6.21 18H5v-1.21l8.66-8.66 1.21 1.21L6.21 18zM11 20l4-4h6v4H11z"/></svg><div style="position:absolute;left:2837px;top:1273px;width:64px;height:64px;background:#6c737c;border-radius:0 11px 11px 0"></div><svg style="position:absolute;left:2848px;top:1285px;" width="40" height="40" viewBox="0 0 24 24"><path fill="#fff" d="M18 16.08c-.76 0-1.44.3-1.96.77L8.91 12.7c.05-.23.09-.46.09-.7s-.04-.47-.09-.7l7.05-4.11c.54.5 1.25.81 2.04.81 1.66 0 3-1.34 3-3s-1.34-3-3-3-3 1.34-3 3c0 .24.04.47.09.7L8.04 9.81C7.5 9.31 6.79 9 6 9c-1.66 0-3 1.34-3 3s1.34 3 3 3c.79 0 1.5-.31 2.04-.81l7.12 4.16c-.05.21-.08.43-.08.65 0 1.61 1.31 2.92 2.92 2.92 1.61 0 2.92-1.31 2.92-2.92s-1.31-2.92-2.92-2.92z"/></svg><div style="position:absolute;left:832.5px;top:1364px;width:23.5px;height:23.5px;border:3px solid #9a9a9a;border-radius:6px;box-sizing:border-box"></div><div style="position:absolute;left:894.13px;top:1356.00px;font-size:34.0px;line-height:34.0px;font-weight:400;color:#e6e6e6;white-space:pre;transform:scaleX(0.9598);transform-origin:0 0;;-webkit-text-stroke:0.45px #e6e6e6">Screenshot 2025-11-20 at 6.04.28 PM.png</div><div style="position:absolute;left:1597.13px;top:1356.00px;font-size:34.0px;line-height:34.0px;font-weight:400;color:#e6e6e6;white-space:pre;transform:scaleX(1.0110);transform-origin:0 0;;-webkit-text-stroke:0.45px #e6e6e6">11/20/25 08:22PM</div><div style="position:absolute;left:1938.13px;top:1356.00px;font-size:34.0px;line-height:34.0px;font-weight:400;color:#e6e6e6;white-space:pre;transform:scaleX(1.0147);transform-origin:0 0;;-webkit-text-stroke:0.45px #e6e6e6">11/20/25 08:22PM</div><div style="position:absolute;left:2280.13px;top:1356.00px;font-size:34.0px;line-height:34.0px;font-weight:400;color:#e6e6e6;white-space:pre;transform:scaleX(0.9456);transform-origin:0 0;;-webkit-text-stroke:0.45px #e6e6e6">38.4 KB</div><div style="position:absolute;left:2473.13px;top:1356.00px;font-size:34.0px;line-height:34.0px;font-weight:400;color:#e6e6e6;white-space:pre;transform:scaleX(0.9977);transform-origin:0 0;;-webkit-text-stroke:0.45px #e6e6e6">admin</div><div style="position:absolute;left:2633px;top:1343px;width:64px;height:64px;background:#55a453;border-radius:11px 0 0 11px"></div><svg style="position:absolute;left:2644px;top:1355px;" width="40" height="40" viewBox="0 0 24 24"><path fill="#fff" d="M19 9h-4V3H9v6H5l7 7 7-7zM5 18v2h14v-2H5z"/></svg><div style="position:absolute;left:2701px;top:1343px;width:64px;height:64px;background:#4aa0b5;border-radius:0"></div><svg style="position:absolute;left:2712px;top:1355px;" width="40" height="40" viewBox="0 0 24 24"><path fill="#fff" d="M21 19V5c0-1.1-.9-2-2-2H5c-1.1 0-2 .9-2 2v14c0 1.1.9 2 2 2h14c1.1 0 2-.9 2-2zM8.5 13.5l2.5 3.01L14.5 12l4.5 6H5l3.5-4.5z"/></svg><div style="position:absolute;left:2769px;top:1343px;width:64px;height:64px;background:#f4c342;border-radius:0"></div><svg style="position:absolute;left:2780px;top:1355px;" width="40" height="40" viewBox="0 0 24 24"><path fill="#111" d="M18.41 5.8L17.2 4.59c-.78-.78-2.05-.78-2.83 0l-2.68 2.68L3 15.96V20h4.04l8.74-8.74 2.63-2.63c.79-.78.79-2.05 0-2.83zM6.21 18H5v-1.21l8.66-8.66 1.21 1.21L6.21 18zM11 20l4-4h6v4H11z"/></svg><div style="position:absolute;left:2837px;top:1343px;width:64px;height:64px;background:#6c737c;border-radius:0 11px 11px 0"></div><svg style="position:absolute;left:2848px;top:1355px;" width="40" height="40" viewBox="0 0 24 24"><path fill="#fff" d="M18 16.08c-.76 0-1.44.3-1.96.77L8.91 12.7c.05-.23.09-.46.09-.7s-.04-.47-.09-.7l7.05-4.11c.54.5 1.25.81 2.04.81 1.66 0 3-1.34 3-3s-1.34-3-3-3-3 1.34-3 3c0 .24.04.47.09.7L8.04 9.81C7.5 9.31 6.79 9 6 9c-1.66 0-3 1.34-3 3s1.34 3 3 3c.79 0 1.5-.31 2.04-.81l7.12 4.16c-.05.21-.08.43-.08.65 0 1.61 1.31 2.92 2.92 2.92 1.61 0 2.92-1.31 2.92-2.92s-1.31-2.92-2.92-2.92z"/></svg><div style="position:absolute;left:832.5px;top:1434px;width:23.5px;height:23.5px;border:3px solid #9a9a9a;border-radius:6px;box-sizing:border-box"></div><div style="position:absolute;left:894.13px;top:1426.00px;font-size:34.0px;line-height:34.0px;font-weight:400;color:#e6e6e6;white-space:pre;transform:scaleX(0.9598);transform-origin:0 0;;-webkit-text-stroke:0.45px #e6e6e6">Screenshot 2025-11-20 at 6.43.17 PM.png</div><div style="position:absolute;left:1597.13px;top:1426.00px;font-size:34.0px;line-height:34.0px;font-weight:400;color:#e6e6e6;white-space:pre;transform:scaleX(1.0110);transform-origin:0 0;;-webkit-text-stroke:0.45px #e6e6e6">11/20/25 08:22PM</div><div style="position:absolute;left:1938.13px;top:1426.00px;font-size:34.0px;line-height:34.0px;font-weight:400;color:#e6e6e6;white-space:pre;transform:scaleX(1.0147);transform-origin:0 0;;-webkit-text-stroke:0.45px #e6e6e6">11/20/25 08:22PM</div><div style="position:absolute;left:2280.13px;top:1426.00px;font-size:34.0px;line-height:34.0px;font-weight:400;color:#e6e6e6;white-space:pre;transform:scaleX(0.9819);transform-origin:0 0;;-webkit-text-stroke:0.45px #e6e6e6">111.6 KB</div><div style="position:absolute;left:2473.13px;top:1426.00px;font-size:34.0px;line-height:34.0px;font-weight:400;color:#e6e6e6;white-space:pre;transform:scaleX(0.9977);transform-origin:0 0;;-webkit-text-stroke:0.45px #e6e6e6">admin</div><div style="position:absolute;left:2633px;top:1413px;width:64px;height:64px;background:#55a453;border-radius:11px 0 0 11px"></div><svg style="position:absolute;left:2644px;top:1425px;" width="40" height="40" viewBox="0 0 24 24"><path fill="#fff" d="M19 9h-4V3H9v6H5l7 7 7-7zM5 18v2h14v-2H5z"/></svg><div style="position:absolute;left:2701px;top:1413px;width:64px;height:64px;background:#4aa0b5;border-radius:0"></div><svg style="position:absolute;left:2712px;top:1425px;" width="40" height="40" viewBox="0 0 24 24"><path fill="#fff" d="M21 19V5c0-1.1-.9-2-2-2H5c-1.1 0-2 .9-2 2v14c0 1.1.9 2 2 2h14c1.1 0 2-.9 2-2zM8.5 13.5l2.5 3.01L14.5 12l4.5 6H5l3.5-4.5z"/></svg><div style="position:absolute;left:2769px;top:1413px;width:64px;height:64px;background:#f4c342;border-radius:0"></div><svg style="position:absolute;left:2780px;top:1425px;" width="40" height="40" viewBox="0 0 24 24"><path fill="#111" d="M18.41 5.8L17.2 4.59c-.78-.78-2.05-.78-2.83 0l-2.68 2.68L3 15.96V20h4.04l8.74-8.74 2.63-2.63c.79-.78.79-2.05 0-2.83zM6.21 18H5v-1.21l8.66-8.66 1.21 1.21L6.21 18zM11 20l4-4h6v4H11z"/></svg><div style="position:absolute;left:2837px;top:1413px;width:64px;height:64px;background:#6c737c;border-radius:0 11px 11px 0"></div><svg style="position:absolute;left:2848px;top:1425px;" width="40" height="40" viewBox="0 0 24 24"><path fill="#fff" d="M18 16.08c-.76 0-1.44.3-1.96.77L8.91 12.7c.05-.23.09-.46.09-.7s-.04-.47-.09-.7l7.05-4.11c.54.5 1.25.81 2.04.81 1.66 0 3-1.34 3-3s-1.34-3-3-3-3 1.34-3 3c0 .24.04.47.09.7L8.04 9.81C7.5 9.31 6.79 9 6 9c-1.66 0-3 1.34-3 3s1.34 3 3 3c.79 0 1.5-.31 2.04-.81l7.12 4.16c-.05.21-.08.43-.08.65 0 1.61 1.31 2.92 2.92 2.92 1.61 0 2.92-1.31 2.92-2.92s-1.31-2.92-2.92-2.92z"/></svg><div style="position:absolute;left:832.5px;top:1504.5px;width:23.5px;height:23.5px;border:3px solid #9a9a9a;border-radius:6px;box-sizing:border-box"></div><div style="position:absolute;left:894.13px;top:1496.50px;font-size:34.0px;line-height:34.0px;font-weight:400;color:#e6e6e6;white-space:pre;transform:scaleX(0.9598);transform-origin:0 0;;-webkit-text-stroke:0.45px #e6e6e6">Screenshot 2025-11-20 at 7.00.52 PM.png</div><div style="position:absolute;left:1597.13px;top:1496.50px;font-size:34.0px;line-height:34.0px;font-weight:400;color:#e6e6e6;white-space:pre;transform:scaleX(1.0110);transform-origin:0 0;;-webkit-text-stroke:0.45px #e6e6e6">11/20/25 08:22PM</div><div style="position:absolute;left:1938.13px;top:1496.50px;font-size:34.0px;line-height:34.0px;font-weight:400;color:#e6e6e6;white-space:pre;transform:scaleX(1.0147);transform-origin:0 0;;-webkit-text-stroke:0.45px #e6e6e6">11/20/25 08:22PM</div><div style="position:absolute;left:2280.13px;top:1496.50px;font-size:34.0px;line-height:34.0px;font-weight:400;color:#e6e6e6;white-space:pre;transform:scaleX(0.9638);transform-origin:0 0;;-webkit-text-stroke:0.45px #e6e6e6">115.8 KB</div><div style="position:absolute;left:2473.13px;top:1496.50px;font-size:34.0px;line-height:34.0px;font-weight:400;color:#e6e6e6;white-space:pre;transform:scaleX(0.9977);transform-origin:0 0;;-webkit-text-stroke:0.45px #e6e6e6">admin</div><div style="position:absolute;left:2633px;top:1483px;width:64px;height:64px;background:#55a453;border-radius:11px 0 0 11px"></div><svg style="position:absolute;left:2644px;top:1495px;" width="40" height="40" viewBox="0 0 24 24"><path fill="#fff" d="M19 9h-4V3H9v6H5l7 7 7-7zM5 18v2h14v-2H5z"/></svg><div style="position:absolute;left:2701px;top:1483px;width:64px;height:64px;background:#4aa0b5;border-radius:0"></div><svg style="position:absolute;left:2712px;top:1495px;" width="40" height="40" viewBox="0 0 24 24"><path fill="#fff" d="M21 19V5c0-1.1-.9-2-2-2H5c-1.1 0-2 .9-2 2v14c0 1.1.9 2 2 2h14c1.1 0 2-.9 2-2zM8.5 13.5l2.5 3.01L14.5 12l4.5 6H5l3.5-4.5z"/></svg><div style="position:absolute;left:2769px;top:1483px;width:64px;height:64px;background:#f4c342;border-radius:0"></div><svg style="position:absolute;left:2780px;top:1495px;" width="40" height="40" viewBox="0 0 24 24"><path fill="#111" d="M18.41 5.8L17.2 4.59c-.78-.78-2.05-.78-2.83 0l-2.68 2.68L3 15.96V20h4.04l8.74-8.74 2.63-2.63c.79-.78.79-2.05 0-2.83zM6.21 18H5v-1.21l8.66-8.66 1.21 1.21L6.21 18zM11 20l4-4h6v4H11z"/></svg><div style="position:absolute;left:2837px;top:1483px;width:64px;height:64px;background:#6c737c;border-radius:0 11px 11px 0"></div><svg style="position:absolute;left:2848px;top:1495px;" width="40" height="40" viewBox="0 0 24 24"><path fill="#fff" d="M18 16.08c-.76 0-1.44.3-1.96.77L8.91 12.7c.05-.23.09-.46.09-.7s-.04-.47-.09-.7l7.05-4.11c.54.5 1.25.81 2.04.81 1.66 0 3-1.34 3-3s-1.34-3-3-3-3 1.34-3 3c0 .24.04.47.09.7L8.04 9.81C7.5 9.31 6.79 9 6 9c-1.66 0-3 1.34-3 3s1.34 3 3 3c.79 0 1.5-.31 2.04-.81l7.12 4.16c-.05.21-.08.43-.08.65 0 1.61 1.31 2.92 2.92 2.92 1.61 0 2.92-1.31 2.92-2.92s-1.31-2.92-2.92-2.92z"/></svg><div style="position:absolute;left:832.5px;top:1573.5px;width:23.5px;height:23.5px;border:3px solid #9a9a9a;border-radius:6px;box-sizing:border-box"></div><div style="position:absolute;left:894.13px;top:1565.50px;font-size:34.0px;line-height:34.0px;font-weight:400;color:#e6e6e6;white-space:pre;transform:scaleX(0.9864);transform-origin:0 0;;-webkit-text-stroke:0.45px #e6e6e6">Text Document.txt</div><div style="position:absolute;left:1174px;top:1568px;width:104px;height:38px;background:#3a8bb8;border-radius:6px"></div><div style="position:absolute;left:1180.54px;top:1572.75px;font-size:26.5px;line-height:26.5px;font-weight:400;color:#fff;white-space:pre;transform:scaleX(1.0195);transform-origin:0 0;;-webkit-text-stroke:0.9px #fff">tagging</div><div style="position:absolute;left:1597.13px;top:1565.50px;font-size:34.0px;line-height:34.0px;font-weight:400;color:#e6e6e6;white-space:pre;transform:scaleX(1.0110);transform-origin:0 0;;-webkit-text-stroke:0.45px #e6e6e6">11/20/25 06:42AM</div><div style="position:absolute;left:1938.13px;top:1565.50px;font-size:34.0px;line-height:34.0px;font-weight:400;color:#e6e6e6;white-space:pre;transform:scaleX(1.0147);transform-origin:0 0;;-webkit-text-stroke:0.45px #e6e6e6">11/20/25 06:32AM</div><div style="position:absolute;left:2280.13px;top:1565.50px;font-size:34.0px;line-height:34.0px;font-weight:400;color:#e6e6e6;white-space:pre;transform:scaleX(0.9761);transform-origin:0 0;;-webkit-text-stroke:0.45px #e6e6e6">5 bytes</div><div style="position:absolute;left:2473.13px;top:1565.50px;font-size:34.0px;line-height:34.0px;font-weight:400;color:#e6e6e6;white-space:pre;transform:scaleX(0.9977);transform-origin:0 0;;-webkit-text-stroke:0.45px #e6e6e6">admin</div><div style="position:absolute;left:2633px;top:1554px;width:64px;height:64px;background:#55a453;border-radius:11px 0 0 11px"></div><svg style="position:absolute;left:2644px;top:1566px;" width="40" height="40" viewBox="0 0 24 24"><path fill="#fff" d="M19 9h-4V3H9v6H5l7 7 7-7zM5 18v2h14v-2H5z"/></svg><div style="position:absolute;left:2701px;top:1554px;width:64px;height:64px;background:#3778f2;border-radius:0;border:2px solid #6a6a6a;box-sizing:border-box"></div><svg style="position:absolute;left:2712px;top:1566px;" width="40" height="40" viewBox="0 0 24 24"><path fill="#fff" d="M3 17.25V21h3.75L17.81 9.94l-3.75-3.75L3 17.25zM20.71 7.04c.39-.39.39-1.02 0-1.41l-2.34-2.34c-.39-.39-1.02-.39-1.41 0l-1.83 1.83 3.75 3.75 1.83-1.83z"/></svg><div style="position:absolute;left:2769px;top:1554px;width:64px;height:64px;background:#f4c342;border-radius:0"></div><svg style="position:absolute;left:2780px;top:1566px;" width="40" height="40" viewBox="0 0 24 24"><path fill="#111" d="M18.41 5.8L17.2 4.59c-.78-.78-2.05-.78-2.83 0l-2.68 2.68L3 15.96V20h4.04l8.74-8.74 2.63-2.63c.79-.78.79-2.05 0-2.83zM6.21 18H5v-1.21l8.66-8.66 1.21 1.21L6.21 18zM11 20l4-4h6v4H11z"/></svg><div style="position:absolute;left:2837px;top:1554px;width:64px;height:64px;background:#6c737c;border-radius:0 11px 11px 0"></div><svg style="position:absolute;left:2848px;top:1566px;" width="40" height="40" viewBox="0 0 24 24"><path fill="#fff" d="M18 16.08c-.76 0-1.44.3-1.96.77L8.91 12.7c.05-.23.09-.46.09-.7s-.04-.47-.09-.7l7.05-4.11c.54.5 1.25.81 2.04.81 1.66 0 3-1.34 3-3s-1.34-3-3-3-3 1.34-3 3c0 .24.04.47.09.7L8.04 9.81C7.5 9.31 6.79 9 6 9c-1.66 0-3 1.34-3 3s1.34 3 3 3c.79 0 1.5-.31 2.04-.81l7.12 4.16c-.05.21-.08.43-.08.65 0 1.61 1.31 2.92 2.92 2.92 1.61 0 2.92-1.31 2.92-2.92s-1.31-2.92-2.92-2.92z"/></svg><div style="position:absolute;left:832.5px;top:1646px;width:23.5px;height:23.5px;border:3px solid #9a9a9a;border-radius:6px;box-sizing:border-box"></div><div style="position:absolute;left:894.13px;top:1638.00px;font-size:34.0px;line-height:34.0px;font-weight:400;color:#e6e6e6;white-space:pre;transform:scaleX(1.0077);transform-origin:0 0;;-webkit-text-stroke:0.45px #e6e6e6">test.mp4</div><div style="position:absolute;left:1039px;top:1642.5px;width:83px;height:35.5px;background:#3b2a21;border:2px solid #a8502a;border-radius:18px;box-sizing:border-box"></div><div style="position:absolute;left:1056.57px;top:1646.00px;font-size:26.0px;line-height:26.0px;font-weight:400;color:#e8703a;white-space:pre;transform:scaleX(0.9050);transform-origin:0 0;;-webkit-text-stroke:0.45px #e8703a">52%</div><div style="position:absolute;left:1597.13px;top:1638.00px;font-size:34.0px;line-height:34.0px;font-weight:400;color:#e6e6e6;white-space:pre;transform:scaleX(1.0110);transform-origin:0 0;;-webkit-text-stroke:0.45px #e6e6e6">11/23/25 01:34AM</div><div style="position:absolute;left:1938.13px;top:1638.00px;font-size:34.0px;line-height:34.0px;font-weight:400;color:#e6e6e6;white-space:pre;transform:scaleX(1.0147);transform-origin:0 0;;-webkit-text-stroke:0.45px #e6e6e6">11/23/25 01:34AM</div><div style="position:absolute;left:2280.13px;top:1638.00px;font-size:34.0px;line-height:34.0px;font-weight:400;color:#e6e6e6;white-space:pre;transform:scaleX(0.9673);transform-origin:0 0;;-webkit-text-stroke:0.45px #e6e6e6">9.0 MB</div><div style="position:absolute;left:2473.13px;top:1638.00px;font-size:34.0px;line-height:34.0px;font-weight:400;color:#e6e6e6;white-space:pre;transform:scaleX(0.9977);transform-origin:0 0;;-webkit-text-stroke:0.45px #e6e6e6">admin</div><div style="position:absolute;left:2633px;top:1626px;width:64px;height:64px;background:#55a453;border-radius:11px 0 0 11px"></div><svg style="position:absolute;left:2644px;top:1638px;" width="40" height="40" viewBox="0 0 24 24"><path fill="#fff" d="M19 9h-4V3H9v6H5l7 7 7-7zM5 18v2h14v-2H5z"/></svg><div style="position:absolute;left:2701px;top:1626px;width:64px;height:64px;background:#4aa0b5;border-radius:0"></div><svg style="position:absolute;left:2712px;top:1638px;" width="40" height="40" viewBox="0 0 24 24"><path fill="#fff" d="M17 10.5V7c0-.55-.45-1-1-1H4c-.55 0-1 .45-1 1v10c0 .55.45 1 1 1h12c.55 0 1-.45 1-1v-3.5l4 4v-11l-4 4z"/></svg><div style="position:absolute;left:2769px;top:1626px;width:64px;height:64px;background:#f4c342;border-radius:0"></div><svg style="position:absolute;left:2780px;top:1638px;" width="40" height="40" viewBox="0 0 24 24"><path fill="#111" d="M18.41 5.8L17.2 4.59c-.78-.78-2.05-.78-2.83 0l-2.68 2.68L3 15.96V20h4.04l8.74-8.74 2.63-2.63c.79-.78.79-2.05 0-2.83zM6.21 18H5v-1.21l8.66-8.66 1.21 1.21L6.21 18zM11 20l4-4h6v4H11z"/></svg><div style="position:absolute;left:2837px;top:1626px;width:64px;height:64px;background:#6c737c;border-radius:0 11px 11px 0"></div><svg style="position:absolute;left:2848px;top:1638px;" width="40" height="40" viewBox="0 0 24 24"><path fill="#fff" d="M18 16.08c-.76 0-1.44.3-1.96.77L8.91 12.7c.05-.23.09-.46.09-.7s-.04-.47-.09-.7l7.05-4.11c.54.5 1.25.81 2.04.81 1.66 0 3-1.34 3-3s-1.34-3-3-3-3 1.34-3 3c0 .24.04.47.09.7L8.04 9.81C7.5 9.31 6.79 9 6 9c-1.66 0-3 1.34-3 3s1.34 3 3 3c.79 0 1.5-.31 2.04-.81l7.12 4.16c-.05.21-.08.43-.08.65 0 1.61 1.31 2.92 2.92 2.92 1.61 0 2.92-1.31 2.92-2.92s-1.31-2.92-2.92-2.92z"/></svg><div style="position:absolute;left:810.73px;top:1734.60px;font-size:34.0px;line-height:34.0px;font-weight:400;color:#e6e6e6;white-space:pre;transform:scaleX(0.9569);transform-origin:0 0;;-webkit-text-stroke:0.45px #e6e6e6">Show</div><div style="position:absolute;left:910px;top:1727px;width:120px;height:54px;background:#0f0f0f;border:2px solid #333;border-radius:12px;box-sizing:border-box"></div><div style="position:absolute;left:927.63px;top:1734.60px;font-size:34.0px;line-height:34.0px;font-weight:400;color:#fff;white-space:pre;transform:scaleX(0.9622);transform-origin:0 0;;-webkit-text-stroke:0.45px #fff">50</div><svg style="position:absolute;left:1000px;top:1742px" width="18" height="26" viewBox="0 0 18 26"><path d="M2 10l7-7 7 7M2 16l7 7 7-7" fill="none" stroke="#fff" stroke-width="3"/></svg><div style="position:absolute;left:1047.13px;top:1734.60px;font-size:34.0px;line-height:34.0px;font-weight:400;color:#e6e6e6;white-space:pre;transform:scaleX(0.9737);transform-origin:0 0;;-webkit-text-stroke:0.45px #e6e6e6">items per page</div><svg style="position:absolute;left:1762px;top:312px" width="24" height="36" viewBox="0 0 12 18"><path d="M1 1v14l3.5-3.2 2.4 5.4 2.2-1-2.3-5.2H11.5z" fill="#000" stroke="#fff" stroke-width="1.1" stroke-linejoin="round"/></svg><div style="position:absolute;left:0px;top:1796px;width:3024px;height:2px;background:#444"></div><div style="position:absolute;left:3022px;top:0px;width:2px;height:1798px;background:#3a3a3a"></div><svg style="position:absolute;left:0;top:1748px" width="50" height="50" viewBox="0 0 50 50"><path d="M0 0V50H50A50 50 0 0 1 0 0z" fill="#2a5593"/><path d="M1 0A49 49 0 0 0 50 49" fill="none" stroke="#444" stroke-width="2.5"/><path d="M3 8A46 46 0 0 0 42 47" fill="none" stroke="#000" stroke-width="1" opacity=".0"/></svg><svg style="position:absolute;left:2974px;top:1748px" width="50" height="50" viewBox="0 0 50 50"><path d="M50 0V50H0A50 50 0 0 0 50 0z" fill="#0d1014"/><path d="M49 0A49 49 0 0 1 0 49" fill="none" stroke="#444" stroke-width="2.5"/></svg></body></html>
